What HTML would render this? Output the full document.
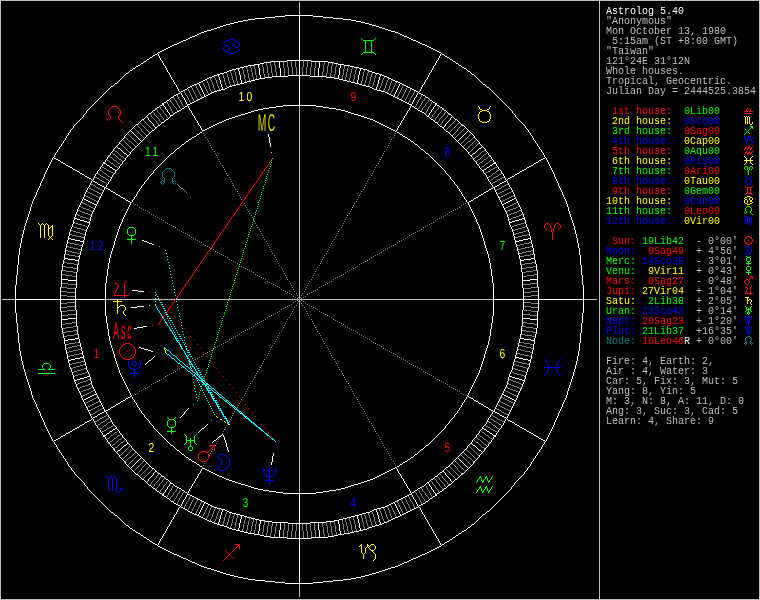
<!DOCTYPE html>
<html lang="en">
<head>
<meta charset="utf-8">
<title>Astrolog 5.40 - Wheel Chart</title>
<style>
html,body{margin:0;padding:0;background:#000;}
body{width:760px;height:600px;overflow:hidden;position:relative;}
#chart{position:absolute;left:0;top:0;width:760px;height:600px;display:block;will-change:transform;}
#side{position:absolute;left:606px;top:0;width:153px;height:600px;will-change:transform;
 font-family:"Liberation Mono",monospace;font-size:10px;line-height:10px;color:#bfbfbf;}
.l{position:absolute;left:0;white-space:pre;height:10px;}
</style>
</head>
<body>
<svg id="chart" width="760" height="600" viewBox="0 0 760 600" shape-rendering="crispEdges" fill="none" stroke-width="1" text-rendering="geometricPrecision">
<g text-anchor="middle">
<g id="frame">
<path stroke="#bfbfbf" d="M0 0.5h760m-760 599h760"/>
<path stroke="#bfbfbf" d="M0.5 0v600m599 -600v600m160 -600v600"/>
</g>
<g id="axes">
<path stroke="#bfbfbf" d="M2 299.5h595"/>
<path stroke="#bfbfbf" d="M299.5 2v595"/>
</g>
<g id="ticks">
<path stroke="#7f7f7f" d="M287 60.5h1m3 0h1m3 0h1m7 0h1m3 0h1m3 0h1m-38 1h1m8 0h1m3 0h1m3 0h1m3 0h1m7 0h1m3 0h1m3 0h1m3 0h1m8 0h1m-59 1h1m3 0h1m3 0h1m8 0h1m3 0h1m3 0h1m3 0h1m7 0h1m3 0h1m3 0h1m3 0h1m8 0h1m3 0h1m3 0h1m-71 1h1m3 0h1m3 0h1m3 0h1m8 0h1m3 0h1m3 0h1m3 0h1m7 0h1m3 0h1m3 0h1m3 0h1m8 0h1m3 0h1m3 0h1m3 0h1m-75 1h1m3 0h1m3 0h1m3 0h1m8 0h1m3 0h1m3 0h1m3 0h1m7 0h1m3 0h1m3 0h1m3 0h1m8 0h1m3 0h1m3 0h1m3 0h1m-87 1h1m3 0h1m7 0h1m3 0h1m3 0h1m4 0h1m7 0h1m3 0h1m3 0h1m3 0h1m7 0h1m3 0h1m3 0h1m3 0h1m7 0h1m4 0h1m3 0h1m3 0h1m7 0h1m3 0h1m-103 1h1m3 0h1m3 0h1m7 0h1m4 0h1m3 0h1m3 0h1m7 0h1m3 0h1m3 0h1m3 0h1m7 0h1m3 0h1m3 0h1m3 0h1m7 0h1m3 0h1m3 0h1m4 0h1m7 0h1m3 0h1m3 0h1m-111 1h1m3 0h1m3 0h1m3 0h1m8 0h1m3 0h1m3 0h1m3 0h1m7 0h1m4 0h1m3 0h1m3 0h1m5 0h1m3 0h1m3 0h1m4 0h1m7 0h1m3 0h1m3 0h1m3 0h1m8 0h1m3 0h1m3 0h1m3 0h1m-115 1h1m3 0h1m4 0h1m2 0h1m8 0h1m3 0h1m3 0h1m3 0h1m8 0h1m3 0h1m3 0h1m3 0h1m5 0h1m3 0h1m3 0h1m3 0h1m8 0h1m3 0h1m3 0h1m3 0h1m8 0h1m2 0h1m4 0h1m3 0h1m-123 1h1m7 0h1m4 0h1m3 0h1m3 0h1m7 0h1m3 0h1m3 0h1m3 0h1m8 0h1m3 0h1m3 0h1m3 0h1m5 0h1m3 0h1m3 0h1m3 0h1m8 0h1m3 0h1m3 0h1m3 0h1m7 0h1m3 0h1m3 0h1m4 0h1m7 0h1m-131 1h1m8 0h1m3 0h1m3 0h1m3 0h1m7 0h1m3 0h1m3 0h1m3 0h1m8 0h1m3 0h1m3 0h1m3 0h1m5 0h1m3 0h1m3 0h1m3 0h1m8 0h1m3 0h1m3 0h1m3 0h1m7 0h1m3 0h1m3 0h1m3 0h1m8 0h1m-135 1h1m3 0h1m8 0h1m3 0h1m3 0h1m3 0h1m7 0h1m3 0h1m3 0h1m3 0h1m8 0h1m3 0h1m3 0h1m3 0h1m5 0h1m3 0h1m3 0h1m3 0h1m8 0h1m3 0h1m3 0h1m3 0h1m7 0h1m3 0h1m3 0h1m3 0h1m8 0h1m3 0h1m-143 1h1m3 0h1m4 0h1m7 0h1m3 0h1m4 0h1m2 0h1m7 0h1m3 0h1m3 0h1m4 0h1m7 0h1m3 0h1m3 0h1m3 0h1m5 0h1m3 0h1m3 0h1m3 0h1m7 0h1m4 0h1m3 0h1m3 0h1m7 0h1m2 0h1m4 0h1m3 0h1m7 0h1m4 0h1m3 0h1m-151 1h1m3 0h1m4 0h1m3 0h1m7 0h1m4 0h1m3 0h1m2 0h1m7 0h1m4 0h1m3 0h1m3 0h1m7 0h1m3 0h1m3 0h1m3 0h1m5 0h1m3 0h1m3 0h1m3 0h1m7 0h1m3 0h1m3 0h1m4 0h1m7 0h1m2 0h1m3 0h1m4 0h1m7 0h1m3 0h1m4 0h1m3 0h1m-155 1h1m4 0h1m3 0h1m3 0h1m8 0h1m3 0h1m3 0h1m2 0h1m8 0h1m3 0h1m3 0h1m3 0h1m7 0h1m3 0h1m3 0h1m3 0h1m5 0h1m3 0h1m3 0h1m3 0h1m7 0h1m3 0h1m3 0h1m3 0h1m8 0h1m2 0h1m3 0h1m3 0h1m8 0h1m3 0h1m3 0h1m4 0h1m-154 1h1m3 0h1m3 0h1m3 0h1m8 0h1m3 0h1m3 0h1m3 0h1m7 0h1m3 0h1m3 0h1m3 0h1m7 0h1m29 0h1m7 0h1m3 0h1m3 0h1m3 0h1m7 0h1m3 0h1m3 0h1m3 0h1m8 0h1m3 0h1m3 0h1m3 0h1m-162 1h1m8 0h1m3 0h1m4 0h1m3 0h1m7 0h1m3 0h1m3 0h1m3 0h1m7 0h1m3 0h1m3 0h1m53 0h1m3 0h1m3 0h1m7 0h1m3 0h1m3 0h1m3 0h1m7 0h1m3 0h1m4 0h1m3 0h1m8 0h1m-171 1h1m8 0h1m4 0h1m3 0h1m3 0h1m7 0h1m3 0h1m4 0h1m2 0h1m7 0h1m69 0h1m7 0h1m2 0h1m4 0h1m3 0h1m7 0h1m3 0h1m3 0h1m4 0h1m8 0h1m-175 1h1m4 0h1m8 0h1m3 0h1m3 0h1m3 0h1m7 0h1m4 0h1m3 0h1m2 0h1m85 0h1m2 0h1m3 0h1m4 0h1m7 0h1m3 0h1m3 0h1m3 0h1m8 0h1m4 0h1m-183 1h1m3 0h1m4 0h1m8 0h1m3 0h1m3 0h1m3 0h1m8 0h1m3 0h1m3 0h1m91 0h1m3 0h1m3 0h1m8 0h1m3 0h1m3 0h1m3 0h1m8 0h1m4 0h1m3 0h1m-187 1h1m4 0h1m4 0h1m7 0h1m3 0h1m4 0h1m2 0h1m8 0h1m3 0h1m99 0h1m3 0h1m8 0h1m2 0h1m4 0h1m3 0h1m7 0h1m4 0h1m4 0h1m-191 1h1m4 0h1m3 0h1m4 0h1m7 0h1m4 0h1m3 0h1m3 0h1m7 0h1m107 0h1m7 0h1m3 0h1m3 0h1m4 0h1m7 0h1m4 0h1m3 0h1m4 0h1m-195 1h1m4 0h1m4 0h1m3 0h1m8 0h1m3 0h1m3 0h1m3 0h1m123 0h1m3 0h1m3 0h1m3 0h1m8 0h1m3 0h1m4 0h1m4 0h1m-194 1h1m4 0h1m3 0h1m4 0h1m7 0h1m3 0h1m4 0h1m2 0h1m123 0h1m2 0h1m4 0h1m3 0h1m7 0h1m4 0h1m3 0h1m4 0h1m-201 1h1m7 0h1m4 0h1m3 0h1m4 0h1m7 0h1m4 0h1m3 0h1m129 0h1m3 0h1m4 0h1m7 0h1m4 0h1m3 0h1m4 0h1m7 0h1m-209 1h1m8 0h1m3 0h1m4 0h1m3 0h1m8 0h1m3 0h1m137 0h1m3 0h1m8 0h1m3 0h1m4 0h1m3 0h1m8 0h1m-213 1h1m4 0h1m7 0h1m4 0h1m3 0h1m4 0h1m7 0h1m145 0h1m7 0h1m4 0h1m3 0h1m4 0h1m7 0h1m4 0h1m-217 1h1m4 0h1m8 0h1m3 0h1m3 0h1m4 0h1m161 0h1m4 0h1m3 0h1m3 0h1m8 0h1m4 0h1m-221 1h1m4 0h1m4 0h1m7 0h1m3 0h1m4 0h1m4 0h1m159 0h1m4 0h1m4 0h1m3 0h1m7 0h1m4 0h1m4 0h1m-224 1h1m3 0h1m4 0h1m8 0h1m3 0h1m3 0h1m4 0h1m159 0h1m4 0h1m3 0h1m3 0h1m8 0h1m4 0h1m3 0h1m-228 1h1m4 0h1m4 0h1m4 0h1m7 0h1m3 0h1m4 0h1m167 0h1m4 0h1m3 0h1m7 0h1m4 0h1m4 0h1m4 0h1m-232 1h1m4 0h1m3 0h1m4 0h1m8 0h1m3 0h1m3 0h1m167 0h1m3 0h1m3 0h1m8 0h1m4 0h1m3 0h1m4 0h1m-231 1h1m4 0h1m4 0h1m4 0h1m7 0h1m3 0h1m175 0h1m3 0h1m7 0h1m4 0h1m4 0h1m4 0h1m-230 1h1m4 0h1m3 0h1m4 0h1m8 0h1m181 0h1m8 0h1m4 0h1m3 0h1m4 0h1m-238 1h1m8 0h1m4 0h1m4 0h1m4 0h1m7 0h1m181 0h1m7 0h1m4 0h1m4 0h1m4 0h1m8 0h1m-246 1h1m8 0h1m4 0h1m3 0h1m4 0h1m197 0h1m4 0h1m3 0h1m4 0h1m8 0h1m-245 1h1m9 0h1m3 0h1m4 0h1m4 0h1m195 0h1m4 0h1m4 0h1m3 0h1m9 0h1m-249 1h1m4 0h1m8 0h1m4 0h1m3 0h1m4 0h1m195 0h1m4 0h1m3 0h1m4 0h1m8 0h1m4 0h1m-252 1h1m3 0h1m9 0h1m3 0h1m4 0h1m203 0h1m4 0h1m3 0h1m9 0h1m3 0h1m-256 1h1m4 0h1m4 0h1m8 0h1m4 0h1m3 0h1m203 0h1m3 0h1m4 0h1m8 0h1m4 0h1m4 0h1m-260 1h1m4 0h1m4 0h1m8 0h1m3 0h1m211 0h1m3 0h1m8 0h1m4 0h1m4 0h1m-263 1h1m3 0h1m5 0h1m3 0h1m8 0h1m4 0h1m209 0h1m4 0h1m8 0h1m3 0h1m5 0h1m3 0h1m-266 1h1m3 0h1m4 0h1m4 0h1m8 0h1m217 0h1m8 0h1m4 0h1m4 0h1m3 0h1m-265 1h1m4 0h1m4 0h1m3 0h1m235 0h1m3 0h1m4 0h1m4 0h1m-264 1h1m4 0h1m3 0h1m4 0h1m233 0h1m4 0h1m3 0h1m4 0h1m-263 1h1m4 0h1m4 0h1m3 0h1m233 0h1m3 0h1m4 0h1m4 0h1m-272 1h1m9 0h1m4 0h1m4 0h1m3 0h1m231 0h1m3 0h1m4 0h1m4 0h1m9 0h1m-280 1h1m9 0h1m4 0h1m3 0h1m239 0h1m3 0h1m4 0h1m9 0h1m-284 1h1m4 0h1m9 0h1m5 0h1m3 0h1m237 0h1m3 0h1m5 0h1m9 0h1m4 0h1m-288 1h1m4 0h1m9 0h1m4 0h1m245 0h1m4 0h1m9 0h1m4 0h1m-286 1h1m4 0h1m8 0h1m5 0h1m243 0h1m5 0h1m8 0h1m4 0h1m-290 1h1m4 0h1m5 0h1m8 0h1m253 0h1m8 0h1m5 0h1m4 0h1m-294 1h1m4 0h1m4 0h1m8 0h1m253 0h1m8 0h1m4 0h1m4 0h1m-297 1h1m4 0h1m4 0h1m4 0h1m8 0h1m251 0h1m8 0h1m4 0h1m4 0h1m4 0h1m-300 1h1m3 0h1m5 0h1m4 0h1m267 0h1m4 0h1m5 0h1m3 0h1m-298 1h1m3 0h1m4 0h1m5 0h1m265 0h1m5 0h1m4 0h1m3 0h1m-297 1h1m4 0h1m4 0h1m4 0h1m265 0h1m4 0h1m4 0h1m4 0h1m-296 1h1m4 0h1m4 0h1m4 0h1m263 0h1m4 0h1m4 0h1m4 0h1m-294 1h1m4 0h1m4 0h1m271 0h1m4 0h1m4 0h1m-304 1h1m11 0h1m4 0h1m3 0h1m271 0h1m3 0h1m4 0h1m11 0h1m-314 1h1m11 0h1m3 0h1m4 0h1m269 0h1m4 0h1m3 0h1m11 0h1m-312 1h1m11 0h1m3 0h1m277 0h1m3 0h1m11 0h1m-316 1h1m5 0h1m10 0h1m4 0h1m275 0h1m4 0h1m10 0h1m5 0h1m-320 1h1m5 0h1m10 0h1m283 0h1m10 0h1m5 0h1m-323 1h1m4 0h1m5 0h1m10 0h1m281 0h1m10 0h1m5 0h1m4 0h1m-326 1h1m4 0h1m5 0h1m301 0h1m5 0h1m4 0h1m-324 1h1m4 0h1m5 0h1m299 0h1m5 0h1m4 0h1m-328 1h1m5 0h1m4 0h1m5 0h1m297 0h1m5 0h1m4 0h1m5 0h1m-332 1h1m5 0h1m4 0h1m5 0h1m295 0h1m5 0h1m4 0h1m5 0h1m-330 1h1m5 0h1m4 0h1m5 0h1m293 0h1m5 0h1m4 0h1m5 0h1m-328 1h1m4 0h1m5 0h1m303 0h1m5 0h1m4 0h1m-326 1h1m4 0h1m5 0h1m301 0h1m5 0h1m4 0h1m-324 1h1m4 0h1m5 0h1m299 0h1m5 0h1m4 0h1m-334 1h1m11 0h1m4 0h1m309 0h1m4 0h1m11 0h1m-344 1h1m11 0h1m4 0h1m307 0h1m4 0h1m11 0h1m-342 1h1m11 0h1m4 0h1m305 0h1m4 0h1m11 0h1m-346 1h1m5 0h1m11 0h1m313 0h1m11 0h1m5 0h1m-350 1h1m5 0h1m11 0h1m311 0h1m11 0h1m5 0h1m-348 1h1m5 0h1m333 0h1m5 0h1m-351 1h1m4 0h1m5 0h1m331 0h1m5 0h1m4 0h1m-354 1h1m4 0h1m5 0h1m329 0h1m5 0h1m4 0h1m-352 1h1m4 0h2m4 0h1m327 0h1m4 0h2m4 0h1m-356 1h1m5 0h1m5 0h1m4 0h1m325 0h1m4 0h1m5 0h1m5 0h1m-360 1h1m5 0h1m5 0h1m4 0h1m323 0h1m4 0h1m5 0h1m5 0h1m-358 1h1m5 0h1m5 0h1m331 0h1m5 0h1m5 0h1m-356 1h1m5 0h1m5 0h1m329 0h1m5 0h1m5 0h1m-354 1h1m5 0h1m5 0h1m327 0h1m5 0h1m5 0h1m-352 1h1m5 0h1m337 0h1m5 0h1m-350 1h1m5 0h1m335 0h1m5 0h1m-361 1h1m12 0h1m5 0h1m333 0h1m5 0h1m12 0h1m-372 1h1m12 0h1m343 0h1m12 0h1m-370 1h2m11 0h1m341 0h1m11 0h2m-373 1h1m5 0h1m11 0h1m339 0h1m11 0h1m5 0h1m-376 1h1m5 0h1m361 0h1m5 0h1m-374 1h2m4 0h1m359 0h1m4 0h2m-378 1h1m6 0h1m4 0h1m357 0h1m4 0h1m6 0h1m-382 1h1m6 0h1m4 0h2m353 0h2m4 0h1m5 0h2m-380 1h2m5 0h1m5 0h1m351 0h1m5 0h1m5 0h1m-376 1h1m5 0h1m5 0h1m349 0h1m5 0h1m5 0h1m-381 1h1m6 0h1m5 0h2m357 0h2m4 0h2m6 0h1m-386 1h2m5 0h2m5 0h1m355 0h1m5 0h1m6 0h2m-383 1h1m6 0h1m5 0h1m353 0h1m5 0h1m6 0h1m-380 1h1m6 0h1m362 0h2m6 0h1m-378 1h2m5 0h2m359 0h1m6 0h2m-375 1h1m6 0h1m357 0h1m6 0h1m-372 1h1m369 0h1m-384 1h1m13 0h2m365 0h2m13 0h1m-396 1h2m13 0h1m363 0h1m13 0h2m-393 1h2m387 0h2m-396 1h1m6 0h1m384 0h2m6 0h1m-400 1h2m5 0h2m381 0h1m6 0h2m-397 1h1m6 0h2m377 0h2m6 0h1m-394 1h1m7 0h2m373 0h2m7 0h1m-399 1h1m6 0h2m7 0h1m371 0h1m7 0h2m6 0h1m-404 1h2m6 0h1m385 0h1m6 0h2m-401 1h1m6 0h1m383 0h1m6 0h1m-405 1h1m6 0h2m5 0h2m379 0h2m5 0h2m6 0h1m-410 1h2m6 0h2m5 0h1m377 0h1m5 0h2m6 0h2m-407 1h2m6 0h1m387 0h1m6 0h2m-403 1h1m6 0h2m383 0h2m5 0h2m-400 1h2m6 0h1m381 0h1m6 0h1m-396 1h2m391 0h2m-393 1h2m387 0h2m-405 1h1m15 0h1m385 0h1m15 0h1m-418 1h2m413 0h2m-415 1h2m409 0h2m-411 1h1m406 0h2m-416 1h1m7 0h2m403 0h1m8 0h1m-422 1h2m7 0h2m399 0h2m7 0h2m-419 1h2m7 0h2m395 0h2m7 0h2m-415 1h2m7 0h1m393 0h1m7 0h2m-420 1h2m7 0h2m405 0h2m7 0h2m-425 1h2m7 0h2m401 0h2m7 0h2m-421 1h2m7 0h2m397 0h2m7 0h2m-417 1h2m7 0h1m395 0h1m7 0h2m-423 1h2m8 0h2m407 0h2m8 0h2m-429 1h2m8 0h2m403 0h2m8 0h2m-425 1h2m8 0h2m399 0h2m8 0h2m-421 1h2m415 0h2m-417 1h2m411 0h2m-413 1h2m407 0h2m-409 1h2m403 0h2m-422 1h2m433 0h2m-435 1h2m429 0h2m-431 1h2m425 0h2m-427 1h2m421 0h2m-433 1h2m8 0h2m417 0h2m8 0h2m-439 1h2m8 0h2m413 0h2m8 0h2m-435 1h3m7 0h2m409 0h2m7 0h3m-430 1h3m421 0h3m-435 1h2m9 0h2m417 0h2m9 0h2m-441 1h2m9 0h2m413 0h2m9 0h2m-437 1h3m429 0h3m-432 1h3m423 0h3m-438 1h2m10 0h2m419 0h2m10 0h2m-445 1h2m10 0h2m415 0h2m10 0h2m-441 1h3m433 0h3m-436 1h3m427 0h3m-430 1h2m423 0h2m-425 1h2m419 0h2m-438 3h2m449 0h2m-451 1h3m443 0h3m-446 1h4m435 0h4m-439 1h3m429 0h3m-445 1h2m11 0h2m425 0h2m11 0h2m-453 1h3m445 0h3m-448 1h4m437 0h4m-441 1h3m431 0h3m-447 1h2m11 0h2m427 0h2m11 0h2m-455 1h3m447 0h3m-450 1h4m439 0h4m-443 1h3m433 0h3m-450 1h3m11 0h2m429 0h2m11 0h3m-458 1h4m446 0h5m-451 1h5m437 0h4m-441 1h3m431 0h3m-451 5h3m459 0h3m-462 1h4m450 0h5m-455 1h5m441 0h4m-445 1h3m435 0h3m-454 1h3m461 0h3m-464 1h4m452 0h5m-457 1h5m443 0h4m-447 1h3m437 0h3m-456 1h3m463 0h3m-466 1h4m454 0h5m-459 1h5m445 0h4m-449 1h3m439 0h3m-457 1h4m461 0h4m-465 1h6m449 0h6m-455 1h4m441 0h4m-461 6h4m465 0h4m-469 1h7m451 0h7m-458 1h4m443 0h4m-463 2h4m467 0h4m-471 1h7m453 0h7m-460 1h4m445 0h4m-464 2h4m467 0h4m-471 1h7m453 0h7m-460 1h4m445 0h4m-465 2h4m469 0h4m-473 1h7m455 0h7m-462 1h4m447 0h4m-466 7h7m462 0h8m-470 1h8m447 0h7m-470 3h7m464 0h8m-472 1h8m449 0h7m-471 3h7m464 0h8m-472 1h8m449 0h7m-471 3h7m464 0h8m-472 1h8m449 0h7m-464 6h8m449 0h7m-471 1h7m464 0h8m-472 3h8m449 0h7m-471 1h7m464 0h8m-472 3h8m449 0h7m-471 1h7m464 0h8m-471 3h8m447 0h7m-469 1h7m462 0h8m-466 7h4m447 0h4m-462 1h7m455 0h7m-473 1h4m469 0h4m-465 2h4m445 0h4m-460 1h7m453 0h7m-471 1h4m467 0h4m-464 2h4m445 0h4m-460 1h7m453 0h7m-471 1h4m467 0h4m-463 2h4m443 0h4m-458 1h7m451 0h7m-469 1h4m465 0h4m-461 6h4m441 0h4m-455 1h6m449 0h6m-465 1h4m461 0h4m-457 1h3m439 0h3m-450 1h5m445 0h4m-458 1h4m454 0h5m-466 1h3m463 0h3m-456 1h3m437 0h3m-448 1h5m443 0h4m-456 1h4m452 0h5m-464 1h3m461 0h3m-454 1h3m435 0h3m-446 1h5m441 0h4m-454 1h4m450 0h5m-462 1h3m459 0h3m-451 5h3m431 0h3m-442 1h5m437 0h4m-450 1h4m446 0h5m-458 1h3m11 0h2m429 0h2m11 0h3m-450 1h3m433 0h3m-443 1h4m439 0h4m-450 1h3m447 0h3m-455 1h2m11 0h2m427 0h2m11 0h2m-447 1h3m431 0h3m-441 1h4m437 0h4m-448 1h3m445 0h3m-453 1h2m11 0h2m425 0h2m11 0h2m-445 1h3m429 0h3m-439 1h4m435 0h4m-446 1h3m443 0h3m-451 1h2m449 0h2m-438 3h2m419 0h2m-425 1h2m423 0h2m-430 1h3m427 0h3m-436 1h3m433 0h3m-441 1h2m10 0h2m415 0h2m10 0h2m-445 1h2m10 0h2m419 0h2m10 0h2m-438 1h3m423 0h3m-432 1h3m429 0h3m-437 1h2m9 0h2m413 0h2m9 0h2m-441 1h2m9 0h2m417 0h2m9 0h2m-435 1h3m421 0h3m-430 1h3m7 0h2m409 0h2m7 0h3m-435 1h2m8 0h2m413 0h2m8 0h2m-439 1h2m8 0h2m417 0h2m8 0h2m-433 1h2m421 0h2m-427 1h2m425 0h2m-431 1h2m429 0h2m-435 1h2m433 0h2m-422 1h2m403 0h2m-409 1h2m407 0h2m-413 1h2m411 0h2m-417 1h2m415 0h2m-421 1h2m8 0h2m399 0h2m8 0h2m-425 1h2m8 0h2m403 0h2m8 0h2m-429 1h2m8 0h2m407 0h2m8 0h2m-423 1h2m7 0h1m395 0h1m7 0h2m-417 1h2m7 0h2m397 0h2m7 0h2m-421 1h2m7 0h2m401 0h2m7 0h2m-425 1h2m7 0h2m405 0h2m7 0h2m-420 1h2m7 0h1m393 0h1m7 0h2m-415 1h2m7 0h2m395 0h2m7 0h2m-419 1h2m7 0h2m399 0h2m7 0h2m-422 1h1m7 0h2m403 0h1m8 0h1m-416 1h1m406 0h2m-411 1h2m409 0h2m-415 1h2m413 0h2m-418 1h1m15 0h1m385 0h1m15 0h1m-405 1h2m387 0h2m-393 1h2m391 0h2m-397 1h2m6 0h1m381 0h1m6 0h1m-399 1h1m6 0h2m383 0h2m5 0h2m-403 1h2m6 0h1m387 0h1m6 0h2m-407 1h2m6 0h2m5 0h1m377 0h1m5 0h2m6 0h2m-410 1h1m6 0h2m5 0h2m379 0h2m5 0h2m6 0h1m-405 1h1m6 0h1m383 0h1m6 0h1m-401 1h2m6 0h1m385 0h1m6 0h2m-404 1h1m6 0h2m7 0h1m371 0h1m7 0h2m6 0h1m-399 1h1m7 0h2m373 0h2m7 0h1m-394 1h1m6 0h2m377 0h2m6 0h1m-397 1h2m5 0h2m381 0h1m6 0h2m-400 1h1m6 0h1m384 0h2m6 0h1m-396 1h2m387 0h2m-393 1h2m13 0h1m363 0h1m13 0h2m-396 1h1m13 0h2m365 0h2m13 0h1m-384 1h1m369 0h1m-372 1h1m6 0h1m357 0h1m6 0h1m-375 1h2m5 0h2m359 0h1m6 0h2m-378 1h1m6 0h1m362 0h2m6 0h1m-380 1h1m6 0h1m5 0h1m353 0h1m5 0h1m6 0h1m-383 1h2m5 0h2m5 0h1m355 0h1m5 0h1m6 0h2m-386 1h1m6 0h1m5 0h2m357 0h2m4 0h2m6 0h1m-381 1h1m5 0h1m5 0h1m349 0h1m5 0h1m5 0h1m-377 1h2m5 0h1m5 0h1m351 0h1m5 0h1m5 0h1m-379 1h1m6 0h1m4 0h2m353 0h2m4 0h1m5 0h2m-382 1h1m6 0h1m4 0h1m357 0h1m4 0h1m6 0h1m-378 1h2m4 0h1m359 0h1m4 0h2m-374 1h1m5 0h1m361 0h1m5 0h1m-376 1h1m5 0h1m11 0h1m339 0h1m11 0h1m5 0h1m-373 1h2m11 0h1m341 0h1m11 0h2m-370 1h1m12 0h1m343 0h1m12 0h1m-372 1h1m12 0h1m5 0h1m333 0h1m5 0h1m12 0h1m-361 1h1m5 0h1m335 0h1m5 0h1m-350 1h1m5 0h1m337 0h1m5 0h1m-352 1h1m5 0h1m5 0h1m327 0h1m5 0h1m5 0h1m-354 1h1m5 0h1m5 0h1m329 0h1m5 0h1m5 0h1m-356 1h1m5 0h1m5 0h1m331 0h1m5 0h1m5 0h1m-358 1h1m5 0h1m5 0h1m4 0h1m323 0h1m4 0h1m5 0h1m5 0h1m-360 1h1m5 0h1m5 0h1m4 0h1m325 0h1m4 0h1m5 0h1m5 0h1m-356 1h1m4 0h2m4 0h1m327 0h1m4 0h2m4 0h1m-352 1h1m4 0h1m5 0h1m329 0h1m5 0h1m4 0h1m-354 1h1m4 0h1m5 0h1m331 0h1m5 0h1m4 0h1m-351 1h1m5 0h1m333 0h1m5 0h1m-348 1h1m5 0h1m11 0h1m311 0h1m11 0h1m5 0h1m-350 1h1m5 0h1m11 0h1m313 0h1m11 0h1m5 0h1m-346 1h1m11 0h1m4 0h1m305 0h1m4 0h1m11 0h1m-342 1h1m11 0h1m4 0h1m307 0h1m4 0h1m11 0h1m-344 1h1m11 0h1m4 0h1m309 0h1m4 0h1m11 0h1m-334 1h1m4 0h1m5 0h1m299 0h1m5 0h1m4 0h1m-324 1h1m4 0h1m5 0h1m301 0h1m5 0h1m4 0h1m-326 1h1m4 0h1m5 0h1m303 0h1m5 0h1m4 0h1m-328 1h1m5 0h1m4 0h1m5 0h1m293 0h1m5 0h1m4 0h1m5 0h1m-330 1h1m5 0h1m4 0h1m5 0h1m295 0h1m5 0h1m4 0h1m5 0h1m-332 1h1m5 0h1m4 0h1m5 0h1m297 0h1m5 0h1m4 0h1m5 0h1m-328 1h1m4 0h1m5 0h1m299 0h1m5 0h1m4 0h1m-324 1h1m4 0h1m5 0h1m301 0h1m5 0h1m4 0h1m-326 1h1m4 0h1m5 0h1m10 0h1m281 0h1m10 0h1m5 0h1m4 0h1m-323 1h1m5 0h1m10 0h1m283 0h1m10 0h1m5 0h1m-320 1h1m5 0h1m10 0h1m4 0h1m275 0h1m4 0h1m10 0h1m5 0h1m-316 1h1m11 0h1m3 0h1m277 0h1m3 0h1m11 0h1m-312 1h1m11 0h1m3 0h1m4 0h1m269 0h1m4 0h1m3 0h1m11 0h1m-314 1h1m11 0h1m4 0h1m3 0h1m271 0h1m3 0h1m4 0h1m11 0h1m-304 1h1m4 0h1m3 0h1m273 0h1m3 0h1m4 0h1m-294 1h1m4 0h1m4 0h1m4 0h1m263 0h1m4 0h1m4 0h1m4 0h1m-296 1h1m4 0h1m4 0h1m4 0h1m265 0h1m4 0h1m4 0h1m4 0h1m-297 1h1m3 0h1m4 0h1m5 0h1m265 0h1m5 0h1m4 0h1m3 0h1m-298 1h1m3 0h1m4 0h1m5 0h1m267 0h1m5 0h1m4 0h1m3 0h1m-300 1h1m4 0h1m4 0h1m4 0h1m8 0h1m251 0h1m8 0h1m4 0h1m4 0h1m4 0h1m-297 1h1m4 0h1m4 0h1m8 0h1m253 0h1m8 0h1m4 0h1m4 0h1m-294 1h1m4 0h1m5 0h1m8 0h1m253 0h1m8 0h1m5 0h1m4 0h1m-291 1h1m5 0h1m8 0h1m5 0h1m243 0h1m5 0h1m8 0h1m5 0h1m-287 1h1m4 0h1m9 0h1m4 0h1m245 0h1m4 0h1m9 0h1m4 0h1m-288 1h1m4 0h1m9 0h1m5 0h1m3 0h1m237 0h1m3 0h1m5 0h1m9 0h1m4 0h1m-284 1h1m8 0h1m5 0h1m3 0h1m239 0h1m3 0h1m5 0h1m8 0h1m-280 1h1m9 0h1m4 0h1m4 0h1m3 0h1m231 0h1m3 0h1m4 0h1m4 0h1m9 0h1m-272 1h1m4 0h1m4 0h1m3 0h1m233 0h1m3 0h1m4 0h1m4 0h1m-263 1h1m4 0h1m3 0h1m4 0h1m233 0h1m4 0h1m3 0h1m4 0h1m-264 1h1m4 0h1m4 0h1m3 0h1m235 0h1m3 0h1m4 0h1m4 0h1m-265 1h1m3 0h1m4 0h1m4 0h1m8 0h1m217 0h1m8 0h1m4 0h1m4 0h1m3 0h1m-266 1h1m3 0h1m5 0h1m3 0h1m8 0h1m4 0h1m209 0h1m4 0h1m8 0h1m3 0h1m5 0h1m3 0h1m-263 1h1m4 0h1m3 0h1m9 0h1m3 0h1m211 0h1m3 0h1m9 0h1m3 0h1m4 0h1m-260 1h1m4 0h1m4 0h1m8 0h1m4 0h1m3 0h1m203 0h1m3 0h1m4 0h1m8 0h1m4 0h1m4 0h1m-256 1h1m3 0h1m9 0h1m3 0h1m4 0h1m203 0h1m4 0h1m3 0h1m9 0h1m3 0h1m-252 1h1m4 0h1m8 0h1m4 0h1m3 0h1m4 0h1m195 0h1m4 0h1m3 0h1m4 0h1m8 0h1m4 0h1m-249 1h1m8 0h1m4 0h1m4 0h1m4 0h1m195 0h1m4 0h1m4 0h1m4 0h1m8 0h1m-245 1h1m8 0h1m4 0h1m3 0h1m4 0h1m197 0h1m4 0h1m3 0h1m4 0h1m8 0h1m-246 1h1m8 0h1m4 0h1m4 0h1m4 0h1m7 0h1m181 0h1m7 0h1m4 0h1m4 0h1m4 0h1m8 0h1m-238 1h1m4 0h1m3 0h1m4 0h1m8 0h1m181 0h1m8 0h1m4 0h1m3 0h1m4 0h1m-230 1h1m4 0h1m4 0h1m4 0h1m7 0h1m3 0h1m175 0h1m3 0h1m7 0h1m4 0h1m4 0h1m4 0h1m-231 1h1m4 0h1m3 0h1m4 0h1m8 0h1m3 0h1m3 0h1m167 0h1m3 0h1m3 0h1m8 0h1m4 0h1m3 0h1m4 0h1m-232 1h1m4 0h1m4 0h1m4 0h1m7 0h1m3 0h1m4 0h1m167 0h1m4 0h1m3 0h1m7 0h1m4 0h1m4 0h1m4 0h1m-228 1h1m3 0h1m4 0h1m8 0h1m3 0h1m3 0h1m4 0h1m159 0h1m4 0h1m3 0h1m3 0h1m8 0h1m4 0h1m3 0h1m-224 1h1m4 0h1m4 0h1m7 0h1m3 0h1m4 0h1m4 0h1m159 0h1m4 0h1m4 0h1m3 0h1m7 0h1m4 0h1m4 0h1m-221 1h1m4 0h1m8 0h1m3 0h1m3 0h1m4 0h1m161 0h1m4 0h1m3 0h1m3 0h1m8 0h1m4 0h1m-217 1h1m4 0h1m7 0h1m4 0h1m3 0h1m4 0h1m7 0h1m145 0h1m7 0h1m4 0h1m3 0h1m4 0h1m7 0h1m4 0h1m-213 1h1m8 0h1m3 0h1m4 0h1m3 0h1m8 0h1m3 0h1m137 0h1m3 0h1m8 0h1m3 0h1m4 0h1m3 0h1m8 0h1m-209 1h1m7 0h1m4 0h1m3 0h1m4 0h1m7 0h1m4 0h1m3 0h1m129 0h1m3 0h1m4 0h1m7 0h1m4 0h1m3 0h1m4 0h1m7 0h1m-201 1h1m4 0h1m3 0h1m4 0h1m7 0h1m3 0h1m4 0h1m2 0h1m123 0h1m2 0h1m4 0h1m3 0h1m7 0h1m4 0h1m3 0h1m4 0h1m-194 1h1m4 0h1m4 0h1m3 0h1m8 0h1m3 0h1m3 0h1m3 0h1m123 0h1m3 0h1m3 0h1m3 0h1m8 0h1m3 0h1m4 0h1m4 0h1m-195 1h1m4 0h1m3 0h1m4 0h1m7 0h1m4 0h1m3 0h1m3 0h1m7 0h1m107 0h1m7 0h1m3 0h1m3 0h1m4 0h1m7 0h1m4 0h1m3 0h1m4 0h1m-191 1h1m4 0h1m4 0h1m7 0h1m3 0h1m4 0h1m2 0h1m8 0h1m3 0h1m99 0h1m3 0h1m8 0h1m2 0h1m4 0h1m3 0h1m7 0h1m4 0h1m4 0h1m-187 1h1m3 0h1m4 0h1m8 0h1m3 0h1m3 0h1m3 0h1m8 0h1m3 0h1m3 0h1m91 0h1m3 0h1m3 0h1m8 0h1m3 0h1m3 0h1m3 0h1m8 0h1m4 0h1m3 0h1m-183 1h1m4 0h1m8 0h1m3 0h1m3 0h1m3 0h1m7 0h1m4 0h1m3 0h1m2 0h1m85 0h1m2 0h1m3 0h1m4 0h1m7 0h1m3 0h1m3 0h1m3 0h1m8 0h1m4 0h1m-175 1h1m8 0h1m4 0h1m3 0h1m3 0h1m7 0h1m3 0h1m4 0h1m2 0h1m7 0h1m69 0h1m7 0h1m2 0h1m4 0h1m3 0h1m7 0h1m3 0h1m3 0h1m4 0h1m8 0h1m-171 1h1m8 0h1m3 0h1m4 0h1m2 0h1m8 0h1m3 0h1m3 0h1m3 0h1m7 0h1m3 0h1m3 0h1m53 0h1m3 0h1m3 0h1m7 0h1m3 0h1m3 0h1m3 0h1m8 0h1m2 0h1m4 0h1m3 0h1m8 0h1m-162 1h1m3 0h1m3 0h1m3 0h1m8 0h1m3 0h1m3 0h1m3 0h1m7 0h1m3 0h1m3 0h1m3 0h1m7 0h1m29 0h1m7 0h1m3 0h1m3 0h1m3 0h1m7 0h1m3 0h1m3 0h1m3 0h1m8 0h1m3 0h1m3 0h1m3 0h1m-154 1h1m4 0h1m3 0h1m3 0h1m7 0h1m4 0h1m3 0h1m2 0h1m8 0h1m3 0h1m3 0h1m3 0h1m7 0h1m3 0h1m3 0h1m3 0h1m5 0h1m3 0h1m3 0h1m3 0h1m7 0h1m3 0h1m3 0h1m3 0h1m8 0h1m2 0h1m3 0h1m4 0h1m7 0h1m3 0h1m3 0h1m4 0h1m-155 1h1m3 0h1m4 0h1m3 0h1m7 0h1m3 0h1m4 0h1m2 0h1m7 0h1m4 0h1m3 0h1m3 0h1m7 0h1m3 0h1m3 0h1m3 0h1m5 0h1m3 0h1m3 0h1m3 0h1m7 0h1m3 0h1m3 0h1m4 0h1m7 0h1m2 0h1m4 0h1m3 0h1m7 0h1m3 0h1m4 0h1m3 0h1m-151 1h1m3 0h1m4 0h1m7 0h1m3 0h1m3 0h1m3 0h1m7 0h1m3 0h1m3 0h1m4 0h1m7 0h1m3 0h1m3 0h1m3 0h1m5 0h1m3 0h1m3 0h1m3 0h1m7 0h1m4 0h1m3 0h1m3 0h1m7 0h1m3 0h1m3 0h1m3 0h1m7 0h1m4 0h1m3 0h1m-143 1h1m3 0h1m8 0h1m3 0h1m3 0h1m3 0h1m7 0h1m3 0h1m3 0h1m3 0h1m8 0h1m3 0h1m3 0h1m3 0h1m5 0h1m3 0h1m3 0h1m3 0h1m8 0h1m3 0h1m3 0h1m3 0h1m7 0h1m3 0h1m3 0h1m3 0h1m8 0h1m3 0h1m-135 1h1m8 0h1m3 0h1m3 0h1m3 0h1m7 0h1m3 0h1m3 0h1m3 0h1m8 0h1m3 0h1m3 0h1m3 0h1m5 0h1m3 0h1m3 0h1m3 0h1m8 0h1m3 0h1m3 0h1m3 0h1m7 0h1m3 0h1m3 0h1m3 0h1m8 0h1m-131 1h1m7 0h1m4 0h1m3 0h1m3 0h1m7 0h1m3 0h1m3 0h1m3 0h1m8 0h1m3 0h1m3 0h1m3 0h1m5 0h1m3 0h1m3 0h1m3 0h1m8 0h1m3 0h1m3 0h1m3 0h1m7 0h1m3 0h1m3 0h1m4 0h1m7 0h1m-123 1h1m3 0h1m4 0h1m2 0h1m8 0h1m3 0h1m3 0h1m3 0h1m7 0h1m4 0h1m3 0h1m3 0h1m5 0h1m3 0h1m3 0h1m4 0h1m7 0h1m3 0h1m3 0h1m3 0h1m8 0h1m2 0h1m4 0h1m3 0h1m-115 1h1m3 0h1m3 0h1m3 0h1m8 0h1m3 0h1m3 0h1m3 0h1m7 0h1m3 0h1m3 0h1m3 0h1m7 0h1m3 0h1m3 0h1m3 0h1m7 0h1m3 0h1m3 0h1m3 0h1m8 0h1m3 0h1m3 0h1m3 0h1m-111 1h1m3 0h1m3 0h1m7 0h1m4 0h1m3 0h1m3 0h1m7 0h1m3 0h1m3 0h1m3 0h1m7 0h1m3 0h1m3 0h1m3 0h1m7 0h1m3 0h1m3 0h1m4 0h1m7 0h1m3 0h1m3 0h1m-103 1h1m3 0h1m7 0h1m3 0h1m3 0h1m4 0h1m7 0h1m3 0h1m3 0h1m3 0h1m7 0h1m3 0h1m3 0h1m3 0h1m7 0h1m4 0h1m3 0h1m3 0h1m7 0h1m3 0h1m-87 1h1m3 0h1m3 0h1m3 0h1m8 0h1m3 0h1m3 0h1m3 0h1m7 0h1m3 0h1m3 0h1m3 0h1m8 0h1m3 0h1m3 0h1m3 0h1m-75 1h1m3 0h1m3 0h1m3 0h1m8 0h1m3 0h1m3 0h1m3 0h1m7 0h1m3 0h1m3 0h1m3 0h1m8 0h1m3 0h1m3 0h1m3 0h1m-71 1h1m3 0h1m3 0h1m8 0h1m3 0h1m3 0h1m3 0h1m7 0h1m3 0h1m3 0h1m3 0h1m8 0h1m3 0h1m3 0h1m-59 1h1m8 0h1m3 0h1m3 0h1m3 0h1m7 0h1m3 0h1m3 0h1m3 0h1m8 0h1m-38 1h1m3 0h1m3 0h1m7 0h1m3 0h1m3 0h1"/>
<path stroke="#fff" d="M299 60.5h1m-21 1h1m19 0h1m19 0h1m-41 1h1m19 0h1m19 0h1m-41 1h1m19 0h1m19 0h1m-62 1h1m20 0h1m19 0h1m19 0h1m20 0h1m-83 1h1m20 0h1m19 0h1m19 0h1m20 0h1m-83 1h1m20 0h1m19 0h1m19 0h1m20 0h1m-83 1h1m20 0h1m19 0h1m19 0h1m20 0h1m-103 1h1m20 0h1m20 0h1m18 0h1m18 0h1m20 0h1m20 0h1m-123 1h1m20 0h1m20 0h1m18 0h1m18 0h1m20 0h1m20 0h1m-123 1h1m20 0h1m20 0h1m18 0h1m18 0h1m20 0h1m20 0h1m-122 1h1m19 0h1m20 0h1m18 0h1m18 0h1m20 0h1m19 0h1m-121 1h1m19 0h1m20 0h1m18 0h1m18 0h1m20 0h1m19 0h1m-121 1h1m19 0h1m20 0h1m18 0h1m18 0h1m20 0h1m19 0h1m-121 1h1m19 0h1m20 0h1m18 0h1m18 0h1m20 0h1m19 0h1m-142 1h1m21 0h1m19 0h1m19 0h1m37 0h1m19 0h1m19 0h1m21 0h1m-163 1h1m21 0h1m19 0h1m77 0h1m19 0h1m21 0h1m-162 1h1m20 0h1m19 0h1m77 0h1m19 0h1m20 0h1m-161 1h1m20 0h1m19 0h1m77 0h1m19 0h1m20 0h1m-161 1h1m20 0h1m117 0h1m20 0h1m-160 1h1m20 0h1m115 0h1m20 0h1m-159 1h1m20 0h1m115 0h1m20 0h1m-159 1h1m20 0h1m115 0h1m20 0h1m-181 1h1m21 0h1m157 0h1m21 0h1m-202 1h1m21 0h1m155 0h1m21 0h1m-201 1h1m21 0h1m155 0h1m21 0h1m-200 1h1m20 0h1m155 0h1m20 0h1m-199 1h1m21 0h1m153 0h1m21 0h1m-198 1h1m20 0h1m153 0h1m20 0h1m-197 1h1m195 0h1m-196 1h1m193 0h1m-195 1h1m193 0h1m-217 1h1m22 0h1m191 0h1m22 0h1m-238 1h1m21 0h1m191 0h1m21 0h1m-237 1h1m22 0h1m189 0h1m22 0h1m-236 1h1m21 0h1m189 0h1m21 0h1m-235 1h1m233 0h1m-234 1h1m231 0h1m-232 1h1m229 0h1m-231 1h1m229 0h1m-230 1h1m227 0h1m-229 1h1m227 0h1m-228 1h1m225 0h1m-251 1h1m23 0h1m225 0h1m23 0h1m-274 1h1m23 0h1m223 0h1m23 0h1m-273 1h1m271 0h1m-272 1h1m269 0h1m-270 1h1m267 0h1m-269 1h1m267 0h1m-268 1h1m265 0h1m-266 1h1m263 0h1m-265 1h1m263 0h1m-264 1h1m261 0h1m-262 1h1m259 0h1m-261 1h1m259 0h1m-260 1h1m257 0h1m-283 1h1m305 0h1m-306 1h1m303 0h1m-304 1h1m301 0h1m-303 1h1m301 0h1m-302 1h1m299 0h1m-300 1h1m297 0h1m-298 1h1m295 0h1m-296 1h1m293 0h1m-294 1h1m291 0h1m-293 1h1m291 0h1m-292 1h1m289 0h1m-290 1h1m287 0h1m-314 3h1m337 0h1m-338 1h1m335 0h1m-336 1h1m333 0h1m-334 1h1m331 0h1m-332 1h1m329 0h1m-330 1h1m327 0h1m-328 1h1m325 0h1m-326 1h1m323 0h1m-324 1h1m321 0h1m-322 1h1m319 0h1m-320 1h1m317 0h1m-343 6h1m365 0h1m-366 1h1m363 0h1m-364 1h2m359 0h2m-361 1h1m357 0h1m-358 1h1m355 0h1m-356 1h1m353 0h1m-354 1h1m351 0h1m-352 1h2m347 0h2m-349 1h1m345 0h1m-346 1h1m343 0h1m-369 7h1m391 0h1m-392 1h2m387 0h2m-389 1h1m385 0h1m-386 1h2m381 0h2m-383 1h1m379 0h1m-380 1h2m375 0h2m-377 1h1m373 0h1m-374 1h2m369 0h2m-371 1h1m367 0h1m-392 10h1m413 0h1m-414 1h2m409 0h2m-411 1h2m405 0h2m-407 1h1m402 0h2m-404 1h2m399 0h1m-400 1h2m395 0h2m-397 1h2m391 0h2m-393 1h1m389 0h1m-412 11h1m430 0h2m-432 1h2m426 0h2m-428 1h2m422 0h2m-424 1h2m418 0h2m-420 1h2m414 0h2m-416 1h2m410 0h2m-412 1h2m407 0h1m-429 14h2m445 0h2m-447 1h3m439 0h3m-442 1h4m431 0h4m-435 1h3m425 0h3m-428 1h2m421 0h2m-444 16h3m457 0h3m-460 1h4m448 0h5m-453 1h5m439 0h4m-443 1h3m433 0h3m-455 17h4m463 0h4m-467 1h7m449 0h7m-456 1h4m441 0h4m-463 19h7m462 0h8m-470 1h8m447 0h7m-470 19h15m449 0h15m-471 19h8m447 0h7m-469 1h7m462 0h8m-463 19h4m441 0h4m-456 1h7m449 0h7m-467 1h4m463 0h4m-455 17h3m433 0h3m-444 1h5m439 0h4m-452 1h4m448 0h5m-460 1h3m457 0h3m-444 16h2m421 0h2m-428 1h3m425 0h3m-435 1h4m431 0h4m-442 1h3m439 0h3m-447 1h2m445 0h2m-430 14h2m407 0h1m-412 1h2m410 0h2m-416 1h2m414 0h2m-420 1h2m418 0h2m-424 1h2m422 0h2m-428 1h2m426 0h2m-431 1h1m430 0h2m-412 11h1m389 0h1m-393 1h2m391 0h2m-397 1h2m395 0h2m-401 1h2m399 0h1m-403 1h1m402 0h2m-407 1h2m405 0h2m-411 1h2m409 0h2m-414 1h1m413 0h1m-392 10h1m367 0h1m-371 1h2m369 0h2m-374 1h1m373 0h1m-377 1h2m375 0h2m-380 1h1m379 0h1m-383 1h2m381 0h2m-386 1h1m385 0h1m-389 1h2m387 0h2m-392 1h1m391 0h1m-369 7h1m343 0h1m-346 1h1m345 0h1m-349 1h2m347 0h2m-352 1h1m351 0h1m-354 1h1m353 0h1m-356 1h1m355 0h1m-358 1h1m357 0h1m-361 1h2m359 0h2m-364 1h1m363 0h1m-366 1h1m365 0h1m-343 6h1m317 0h1m-320 1h1m319 0h1m-322 1h1m321 0h1m-324 1h1m323 0h1m-326 1h1m325 0h1m-328 1h1m327 0h1m-330 1h1m329 0h1m-332 1h1m331 0h1m-334 1h1m333 0h1m-336 1h1m335 0h1m-338 1h1m337 0h1m-314 3h1m287 0h1m-290 1h1m289 0h1m-292 1h1m291 0h1m-293 1h1m291 0h1m-294 1h1m293 0h1m-296 1h1m295 0h1m-298 1h1m297 0h1m-300 1h1m299 0h1m-302 1h1m301 0h1m-303 1h1m301 0h1m-304 1h1m303 0h1m-306 1h1m305 0h1m-283 1h1m257 0h1m-260 1h1m259 0h1m-261 1h1m259 0h1m-262 1h1m261 0h1m-264 1h1m263 0h1m-265 1h1m263 0h1m-266 1h1m265 0h1m-268 1h1m267 0h1m-269 1h1m267 0h1m-270 1h1m269 0h1m-272 1h1m271 0h1m-273 1h1m23 0h1m223 0h1m23 0h1m-274 1h1m23 0h1m225 0h1m23 0h1m-251 1h1m225 0h1m-228 1h1m227 0h1m-229 1h1m227 0h1m-230 1h1m229 0h1m-232 1h1m231 0h1m-233 1h1m231 0h1m-234 1h1m233 0h1m-235 1h1m21 0h1m189 0h1m21 0h1m-236 1h1m21 0h1m191 0h1m21 0h1m-237 1h1m21 0h1m191 0h1m21 0h1m-238 1h1m21 0h1m193 0h1m21 0h1m-217 1h1m193 0h1m-196 1h1m195 0h1m-197 1h1m195 0h1m-198 1h1m21 0h1m153 0h1m21 0h1m-199 1h1m21 0h1m153 0h1m21 0h1m-200 1h1m21 0h1m155 0h1m21 0h1m-201 1h1m21 0h1m155 0h1m21 0h1m-202 1h1m22 0h1m155 0h1m22 0h1m-203 1h1m21 0h1m157 0h1m21 0h1m-181 1h1m20 0h1m115 0h1m20 0h1m-159 1h1m20 0h1m115 0h1m20 0h1m-159 1h1m20 0h1m115 0h1m20 0h1m-160 1h1m20 0h1m117 0h1m20 0h1m-161 1h1m20 0h1m19 0h1m77 0h1m19 0h1m20 0h1m-161 1h1m20 0h1m19 0h1m77 0h1m19 0h1m20 0h1m-162 1h1m21 0h1m19 0h1m77 0h1m19 0h1m21 0h1m-163 1h1m20 0h1m20 0h1m19 0h1m37 0h1m19 0h1m20 0h1m20 0h1m-142 1h1m19 0h1m20 0h1m18 0h1m18 0h1m20 0h1m19 0h1m-121 1h1m19 0h1m20 0h1m18 0h1m18 0h1m20 0h1m19 0h1m-121 1h1m19 0h1m20 0h1m18 0h1m18 0h1m20 0h1m19 0h1m-121 1h1m19 0h1m20 0h1m18 0h1m18 0h1m20 0h1m19 0h1m-122 1h1m20 0h1m20 0h1m18 0h1m18 0h1m20 0h1m20 0h1m-123 1h1m20 0h1m20 0h1m18 0h1m18 0h1m20 0h1m20 0h1m-123 1h1m20 0h1m19 0h1m19 0h1m19 0h1m19 0h1m20 0h1m-103 1h1m20 0h1m19 0h1m19 0h1m20 0h1m-83 1h1m20 0h1m19 0h1m19 0h1m20 0h1m-83 1h1m20 0h1m19 0h1m19 0h1m20 0h1m-83 1h1m20 0h1m19 0h1m19 0h1m20 0h1m-62 1h1m19 0h1m19 0h1m-41 1h1m19 0h1m19 0h1m-41 1h1m19 0h1m19 0h1m-21 1h1"/>
</g>
<g id="rings">
<path stroke="#fff" d="M285 15.5h28m-38 1h10m28 0h10m-58 1h10m48 0h10m-78 1h10m68 0h10m-95 1h7m88 0h8m-108 1h5m103 0h5m-118 1h5m113 0h5m-127 1h4m123 0h4m-135 1h4m131 0h4m-143 1h4m139 0h3m-149 1h3m146 0h4m-156 1h3m153 0h3m-162 1h3m159 0h3m-168 1h3m165 0h3m-174 1h3m171 0h3m-181 1h4m177 0h3m-187 1h3m184 0h4m-194 1h3m191 0h3m-199 1h2m197 0h2m-203 1h2m201 0h2m-207 1h2m205 0h2m-212 1h3m209 0h3m-217 1h2m215 0h2m-221 1h2m219 0h2m-225 1h2m223 0h2m-230 1h3m227 0h3m-235 1h2m233 0h2m-239 1h2m237 0h2m-243 1h2m241 0h2m-248 1h3m245 0h3m-253 1h2m251 0h2m-257 1h2m255 0h2m-261 1h2m259 0h2m-265 1h2m263 0h2m-269 1h2m267 0h2m-273 1h2m271 0h2m-277 1h2m275 0h2m-281 1h2m279 0h2m-284 1h1m283 0h1m-287 1h2m285 0h2m-291 1h2m289 0h1m-293 1h1m292 0h2m-297 1h2m295 0h2m-300 1h1m299 0h1m-303 1h2m301 0h2m-306 1h1m305 0h1m-309 1h2m307 0h2m-312 1h1m311 0h1m-315 1h2m313 0h2m-318 1h1m317 0h1m-321 1h2m319 0h2m-325 1h2m323 0h1m-327 1h1m326 0h2m-331 1h2m329 0h2m-334 1h1m333 0h1m-337 1h2m335 0h1m-339 1h1m338 0h2m-342 1h1m341 0h1m-345 1h2m343 0h1m-347 1h1m346 0h2m-350 1h1m349 0h1m-352 1h1m351 0h1m-354 1h1m353 0h1m-356 1h1m355 0h1m-358 1h1m357 0h1m-360 1h1m359 0h1m-362 1h1m361 0h1m-364 1h1m363 0h1m-367 1h2m365 0h1m-369 1h1m368 0h2m-372 1h1m371 0h1m-375 1h2m373 0h1m-377 1h1m376 0h2m-380 1h1m379 0h1m-382 1h1m381 0h1m-384 1h1m383 0h1m-386 1h1m385 0h1m-388 1h1m387 0h1m-390 1h1m389 0h1m-392 1h1m391 0h1m-394 1h1m393 0h1m-396 1h1m395 0h1m-398 1h1m397 0h1m-400 1h1m399 0h1m-402 1h1m401 0h1m-404 1h1m403 0h1m-406 1h1m405 0h1m-408 1h1m407 0h1m-410 1h1m409 0h1m-412 1h1m411 0h1m-414 1h1m413 0h1m-416 1h1m415 0h1m-418 1h1m417 0h1m-420 1h1m419 0h1m-422 1h1m421 0h1m-424 1h1m423 0h1m-426 1h1m425 0h1m-427 1h1m425 0h1m-428 1h1m427 0h1m-430 1h1m429 0h1m-432 1h1m431 0h1m-433 1h1m431 0h1m-434 1h1m433 0h1m-436 1h1m435 0h1m-438 1h1m437 0h1m-440 1h1m439 0h1m-442 1h1m441 0h1m-444 1h1m443 0h1m-446 1h1m445 0h1m-448 1h1m447 0h1m-450 1h1m449 0h1m-452 1h1m451 0h1m-453 1h1m451 0h1m-454 1h1m453 0h1m-456 1h1m455 0h1m-458 1h1m457 0h1m-459 1h1m457 0h1m-460 1h1m459 0h1m-462 1h1m461 0h1m-463 1h1m461 0h1m-464 1h1m463 0h1m-466 1h1m465 0h1m-467 1h1m465 0h1m-468 1h1m467 0h1m-469 1h1m467 0h1m-470 1h1m469 0h1m-472 1h1m471 0h1m-473 1h1m471 0h1m-474 1h1m473 0h1m-476 1h1m475 0h1m-477 1h1m475 0h1m-478 1h1m477 0h1m-480 1h1m479 0h1m-481 1h1m479 0h1m-482 1h1m481 0h1m-484 1h1m483 0h1m-485 1h1m483 0h1m-486 1h1m485 0h1m-488 1h1m487 0h1m-489 1h1m487 0h1m-490 1h1m489 0h1m-491 1h1m489 0h1m-492 1h1m491 0h1m-494 1h1m493 0h1m-495 1h1m493 0h1m-496 1h1m495 0h1m-497 1h1m495 0h1m-498 1h1m497 0h1m-499 1h1m497 0h1m-500 1h1m499 0h1m-501 1h1m499 0h1m-502 1h1m501 0h1m-503 1h1m501 0h1m-504 1h1m503 0h1m-505 1h1m503 0h1m-506 1h1m505 0h1m-507 1h1m505 0h1m-508 1h1m507 0h1m-509 1h1m507 0h1m-510 1h1m509 0h1m-511 1h1m509 0h1m-511 1h1m509 0h1m-512 1h1m511 0h1m-513 1h1m511 0h1m-514 1h1m513 0h1m-515 1h1m513 0h1m-516 1h1m515 0h1m-517 1h1m515 0h1m-518 1h1m517 0h1m-519 1h1m517 0h1m-519 1h1m517 0h1m-520 1h1m519 0h1m-521 1h1m519 0h1m-522 1h1m521 0h1m-523 1h1m521 0h1m-524 1h1m523 0h1m-525 1h1m523 0h1m-526 1h1m525 0h1m-527 1h1m525 0h1m-527 1h1m525 0h1m-528 1h1m527 0h1m-529 1h1m527 0h1m-530 1h1m529 0h1m-531 1h1m529 0h1m-532 1h1m531 0h1m-533 1h1m531 0h1m-534 1h1m533 0h1m-535 1h1m533 0h1m-535 1h1m533 0h1m-536 1h1m535 0h1m-537 1h1m535 0h1m-537 1h1m535 0h1m-538 1h1m537 0h1m-539 1h1m537 0h1m-539 1h1m537 0h1m-539 1h1m537 0h1m-540 1h1m539 0h1m-541 1h1m539 0h1m-541 1h1m539 0h1m-542 1h1m541 0h1m-543 1h1m541 0h1m-543 1h1m541 0h1m-544 1h1m543 0h1m-545 1h1m543 0h1m-545 1h1m543 0h1m-546 1h1m545 0h1m-547 1h1m545 0h1m-547 1h1m545 0h1m-548 1h1m547 0h1m-549 1h1m547 0h1m-549 1h1m547 0h1m-550 1h1m549 0h1m-551 1h1m549 0h1m-551 1h1m549 0h1m-551 1h1m549 0h1m-552 1h1m551 0h1m-553 1h1m551 0h1m-553 1h1m551 0h1m-553 1h1m551 0h1m-554 1h1m553 0h1m-555 1h1m553 0h1m-555 1h1m553 0h1m-555 1h1m553 0h1m-556 1h1m555 0h1m-557 1h1m555 0h1m-557 1h1m555 0h1m-557 1h1m555 0h1m-557 1h1m555 0h1m-558 1h1m557 0h1m-559 1h1m557 0h1m-559 1h1m557 0h1m-559 1h1m557 0h1m-559 1h1m557 0h1m-560 1h1m559 0h1m-561 1h1m559 0h1m-561 1h1m559 0h1m-561 1h1m559 0h1m-561 1h1m559 0h1m-561 1h1m559 0h1m-561 1h1m559 0h1m-562 1h1m561 0h1m-563 1h1m561 0h1m-563 1h1m561 0h1m-563 1h1m561 0h1m-563 1h1m561 0h1m-563 1h1m561 0h1m-563 1h1m561 0h1m-563 1h1m561 0h1m-563 1h1m561 0h1m-563 1h1m561 0h1m-564 1h1m563 0h1m-565 1h1m563 0h1m-565 1h1m563 0h1m-565 1h1m563 0h1m-565 1h1m563 0h1m-565 1h1m563 0h1m-565 1h1m563 0h1m-565 1h1m563 0h1m-565 1h1m563 0h1m-565 1h1m563 0h1m-566 1h1m565 0h1m-567 1h1m565 0h1m-567 1h1m565 0h1m-567 1h1m565 0h1m-567 1h1m565 0h1m-567 1h1m565 0h1m-567 1h1m565 0h1m-567 1h1m565 0h1m-567 1h1m565 0h1m-567 1h1m565 0h1m-568 1h1m567 0h1m-569 1h1m567 0h1m-569 1h1m567 0h1m-569 1h1m567 0h1m-569 1h1m567 0h1m-569 1h1m567 0h1m-569 1h1m567 0h1m-569 1h1m567 0h1m-569 1h1m567 0h1m-569 1h1m567 0h1m-569 1h1m567 0h1m-569 1h1m567 0h1m-569 1h1m567 0h1m-569 1h1m567 0h1m-569 1h1m567 0h1m-569 1h1m567 0h1m-569 1h1m567 0h1m-569 1h1m567 0h1m-569 1h1m567 0h1m-569 1h1m567 0h1m-569 1h1m567 0h1m-569 1h1m567 0h1m-569 1h1m567 0h1m-569 1h1m567 0h1m-569 1h1m567 0h1m-569 1h1m567 0h1m-569 1h1m567 0h1m-569 1h1m567 0h1m-568 1h1m565 0h1m-567 1h1m565 0h1m-567 1h1m565 0h1m-567 1h1m565 0h1m-567 1h1m565 0h1m-567 1h1m565 0h1m-567 1h1m565 0h1m-567 1h1m565 0h1m-567 1h1m565 0h1m-567 1h1m565 0h1m-566 1h1m563 0h1m-565 1h1m563 0h1m-565 1h1m563 0h1m-565 1h1m563 0h1m-565 1h1m563 0h1m-565 1h1m563 0h1m-565 1h1m563 0h1m-565 1h1m563 0h1m-565 1h1m563 0h1m-565 1h1m563 0h1m-564 1h1m561 0h1m-563 1h1m561 0h1m-563 1h1m561 0h1m-563 1h1m561 0h1m-563 1h1m561 0h1m-563 1h1m561 0h1m-563 1h1m561 0h1m-563 1h1m561 0h1m-563 1h1m561 0h1m-563 1h1m561 0h1m-562 1h1m559 0h1m-561 1h1m559 0h1m-561 1h1m559 0h1m-561 1h1m559 0h1m-561 1h1m559 0h1m-561 1h1m559 0h1m-561 1h1m559 0h1m-561 1h1m559 0h1m-560 1h1m557 0h1m-559 1h1m557 0h1m-559 1h1m557 0h1m-559 1h1m557 0h1m-559 1h1m557 0h1m-558 1h1m555 0h1m-557 1h1m555 0h1m-557 1h1m555 0h1m-557 1h1m555 0h1m-557 1h1m555 0h1m-556 1h1m553 0h1m-555 1h1m553 0h1m-555 1h1m553 0h1m-555 1h1m553 0h1m-554 1h1m551 0h1m-553 1h1m551 0h1m-553 1h1m551 0h1m-553 1h1m551 0h1m-552 1h1m549 0h1m-551 1h1m549 0h1m-551 1h1m549 0h1m-550 1h1m547 0h1m-549 1h1m547 0h1m-549 1h1m547 0h1m-549 1h1m547 0h1m-548 1h1m545 0h1m-547 1h1m545 0h1m-547 1h1m545 0h1m-546 1h1m543 0h1m-545 1h1m543 0h1m-545 1h1m543 0h1m-544 1h1m541 0h1m-543 1h1m541 0h1m-543 1h1m541 0h1m-542 1h1m539 0h1m-541 1h1m539 0h1m-541 1h1m539 0h1m-540 1h1m537 0h1m-539 1h1m537 0h1m-539 1h1m537 0h1m-538 1h1m535 0h1m-537 1h1m535 0h1m-537 1h1m535 0h1m-537 1h1m535 0h1m-536 1h1m533 0h1m-535 1h1m533 0h1m-535 1h1m533 0h1m-534 1h1m531 0h1m-533 1h1m531 0h1m-532 1h1m529 0h1m-531 1h1m529 0h1m-530 1h1m527 0h1m-529 1h1m527 0h1m-528 1h1m525 0h1m-527 1h1m525 0h1m-527 1h1m525 0h1m-526 1h1m523 0h1m-525 1h1m523 0h1m-524 1h1m521 0h1m-523 1h1m521 0h1m-522 1h1m519 0h1m-521 1h1m519 0h1m-520 1h1m517 0h1m-519 1h1m517 0h1m-519 1h1m517 0h1m-518 1h1m515 0h1m-517 1h1m515 0h1m-516 1h1m513 0h1m-515 1h1m513 0h1m-514 1h1m511 0h1m-513 1h1m511 0h1m-512 1h1m509 0h1m-511 1h1m509 0h1m-511 1h1m509 0h1m-510 1h1m507 0h1m-509 1h1m507 0h1m-508 1h1m505 0h1m-507 1h1m505 0h1m-506 1h1m503 0h1m-505 1h1m503 0h1m-504 1h1m501 0h1m-503 1h1m501 0h1m-502 1h1m499 0h1m-501 1h1m499 0h1m-500 1h1m497 0h1m-499 1h1m497 0h1m-498 1h1m495 0h1m-497 1h1m495 0h1m-496 1h1m493 0h1m-495 1h1m493 0h1m-494 1h1m491 0h1m-492 1h1m489 0h1m-491 1h1m489 0h1m-490 1h1m487 0h1m-488 1h1m485 0h1m-487 1h1m485 0h1m-486 1h1m483 0h1m-485 1h1m483 0h1m-484 1h1m481 0h1m-482 1h1m479 0h1m-481 1h1m479 0h1m-480 1h1m477 0h1m-478 1h1m475 0h1m-477 1h1m475 0h1m-476 1h1m473 0h1m-474 1h1m471 0h1m-473 1h1m471 0h1m-472 1h1m469 0h1m-470 1h1m467 0h1m-469 1h1m467 0h1m-468 1h1m465 0h1m-466 1h1m463 0h1m-465 1h1m463 0h1m-464 1h1m461 0h1m-463 1h1m461 0h1m-462 1h1m459 0h1m-460 1h1m457 0h1m-458 1h1m455 0h1m-457 1h1m455 0h1m-456 1h1m453 0h1m-454 1h1m451 0h1m-452 1h1m449 0h1m-451 1h1m449 0h1m-450 1h1m447 0h1m-448 1h1m445 0h1m-446 1h1m443 0h1m-444 1h1m441 0h1m-442 1h1m439 0h1m-440 1h1m437 0h1m-438 1h1m435 0h1m-436 1h1m433 0h1m-434 1h1m431 0h1m-432 1h1m429 0h1m-431 1h1m429 0h1m-430 1h1m427 0h1m-428 1h1m425 0h1m-426 1h1m423 0h1m-425 1h1m423 0h1m-424 1h1m421 0h1m-422 1h1m419 0h1m-420 1h1m417 0h1m-418 1h1m415 0h1m-416 1h1m413 0h1m-414 1h1m411 0h1m-412 1h1m409 0h1m-410 1h1m407 0h1m-408 1h1m405 0h1m-406 1h1m403 0h1m-404 1h1m401 0h1m-402 1h1m399 0h1m-400 1h1m397 0h1m-398 1h1m395 0h1m-396 1h1m393 0h1m-394 1h1m391 0h1m-392 1h1m389 0h1m-390 1h1m387 0h1m-388 1h1m385 0h1m-386 1h1m383 0h1m-384 1h1m381 0h1m-382 1h1m379 0h1m-380 1h1m376 0h2m-378 1h2m373 0h1m-374 1h1m371 0h1m-372 1h1m368 0h2m-370 1h2m365 0h1m-366 1h1m363 0h1m-364 1h1m361 0h1m-362 1h1m359 0h1m-360 1h1m357 0h1m-358 1h1m355 0h1m-356 1h1m353 0h1m-354 1h1m351 0h1m-352 1h1m349 0h1m-350 1h1m346 0h2m-348 1h2m343 0h1m-344 1h1m341 0h1m-342 1h1m338 0h2m-340 1h2m335 0h1m-336 1h1m333 0h1m-334 1h2m329 0h2m-331 1h1m326 0h2m-328 1h2m323 0h1m-324 1h2m319 0h2m-321 1h1m317 0h1m-318 1h2m313 0h2m-315 1h1m311 0h1m-312 1h2m307 0h2m-309 1h1m305 0h1m-306 1h2m301 0h2m-303 1h1m299 0h1m-300 1h2m295 0h2m-297 1h1m292 0h2m-294 1h2m289 0h1m-290 1h2m285 0h2m-287 1h1m283 0h1m-284 1h2m279 0h2m-281 1h2m275 0h2m-277 1h2m271 0h2m-273 1h2m267 0h2m-269 1h2m263 0h2m-265 1h2m259 0h2m-261 1h2m255 0h2m-257 1h2m251 0h2m-253 1h3m245 0h3m-248 1h2m241 0h2m-243 1h2m237 0h2m-239 1h2m233 0h2m-235 1h3m227 0h3m-230 1h2m223 0h2m-225 1h2m219 0h2m-221 1h2m215 0h2m-217 1h3m209 0h3m-212 1h2m205 0h2m-207 1h2m201 0h2m-203 1h2m197 0h2m-199 1h3m191 0h3m-194 1h3m184 0h4m-188 1h4m177 0h3m-180 1h3m171 0h3m-174 1h3m165 0h3m-168 1h3m159 0h3m-162 1h3m153 0h3m-156 1h3m146 0h4m-150 1h4m139 0h3m-142 1h4m131 0h4m-135 1h4m123 0h4m-127 1h5m113 0h5m-118 1h5m103 0h5m-108 1h7m88 0h8m-96 1h10m68 0h10m-78 1h10m48 0h10m-58 1h10m28 0h10m-38 1h28"/>
<path stroke="#fff" d="M287 60.5h24m-41 1h17m24 0h17m-64 1h6m58 0h6m-74 1h4m70 0h4m-84 1h6m78 0h6m-96 1h6m90 0h6m-106 1h4m102 0h4m-114 1h4m110 0h5m-123 1h4m119 0h4m-131 1h4m127 0h4m-138 1h3m135 0h2m-142 1h2m140 0h3m-148 1h3m145 0h3m-155 1h4m151 0h4m-162 1h3m159 0h3m-168 1h3m165 0h2m-172 1h2m170 0h3m-178 1h3m175 0h2m-182 1h2m180 0h2m-186 1h2m184 0h2m-190 1h2m188 0h2m-194 1h2m192 0h3m-199 1h2m197 0h2m-203 1h2m201 0h2m-208 1h3m205 0h2m-212 1h2m210 0h2m-216 1h2m214 0h2m-220 1h2m218 0h2m-223 1h1m222 0h2m-227 1h2m225 0h2m-231 1h2m229 0h2m-235 1h2m233 0h2m-238 1h1m237 0h1m-241 1h2m239 0h2m-245 1h2m243 0h2m-249 1h2m247 0h2m-252 1h1m251 0h1m-255 1h2m253 0h2m-258 1h1m257 0h1m-260 1h1m259 0h1m-263 1h2m261 0h2m-266 1h1m265 0h1m-269 1h2m267 0h2m-272 1h1m271 0h1m-274 1h1m273 0h1m-277 1h2m275 0h2m-280 1h1m279 0h1m-283 1h2m281 0h2m-286 1h1m285 0h1m-288 1h1m287 0h1m-291 1h2m289 0h2m-294 1h1m293 0h1m-296 1h1m295 0h1m-299 1h2m297 0h1m-301 1h1m300 0h2m-304 1h1m303 0h1m-306 1h1m305 0h1m-308 1h1m307 0h1m-310 1h1m309 0h1m-313 1h2m311 0h2m-316 1h1m315 0h1m-318 1h1m317 0h1m-320 1h1m319 0h1m-322 1h1m321 0h1m-325 1h2m323 0h1m-327 1h1m326 0h2m-330 1h1m329 0h1m-332 1h1m331 0h1m-334 1h1m333 0h1m-336 1h1m335 0h1m-338 1h1m337 0h1m-340 1h1m339 0h1m-342 1h1m341 0h1m-344 1h1m343 0h1m-346 1h1m345 0h1m-348 1h1m347 0h1m-350 1h1m349 0h1m-351 1h1m349 0h1m-352 1h1m351 0h1m-354 1h1m353 0h1m-356 1h1m355 0h1m-358 1h1m357 0h1m-360 1h1m359 0h1m-361 1h1m359 0h1m-362 1h1m361 0h1m-364 1h1m363 0h1m-366 1h1m365 0h1m-368 1h1m367 0h1m-370 1h1m369 0h1m-372 1h1m371 0h1m-373 1h1m371 0h1m-374 1h1m373 0h1m-376 1h1m375 0h1m-378 1h1m377 0h1m-379 1h1m377 0h1m-380 1h1m379 0h1m-382 1h1m381 0h1m-384 1h1m383 0h1m-385 1h1m383 0h1m-386 1h1m385 0h1m-388 1h1m387 0h1m-389 1h1m387 0h1m-390 1h1m389 0h1m-392 1h1m391 0h1m-394 1h1m393 0h1m-395 1h1m393 0h1m-396 1h1m395 0h1m-398 1h1m397 0h1m-399 1h1m397 0h1m-400 1h1m399 0h1m-402 1h1m401 0h1m-404 1h1m403 0h1m-405 1h1m403 0h1m-406 1h1m405 0h1m-408 1h1m407 0h1m-409 1h1m407 0h1m-410 1h1m409 0h1m-411 1h1m409 0h1m-412 1h1m411 0h1m-413 1h1m411 0h1m-414 1h1m413 0h1m-416 1h1m415 0h1m-417 1h1m415 0h1m-418 1h1m417 0h1m-419 1h1m417 0h1m-420 1h1m419 0h1m-421 1h1m419 0h1m-422 1h1m421 0h1m-424 1h1m423 0h1m-425 1h1m423 0h1m-426 1h1m425 0h1m-427 1h1m425 0h1m-428 1h1m427 0h1m-429 1h1m427 0h1m-430 1h1m429 0h1m-431 1h1m429 0h1m-431 1h1m429 0h1m-432 1h1m431 0h1m-433 1h1m431 0h1m-434 1h1m433 0h1m-435 1h1m433 0h1m-436 1h1m435 0h1m-437 1h1m435 0h1m-438 1h1m437 0h1m-439 1h1m437 0h1m-440 1h1m439 0h1m-441 1h1m439 0h1m-442 1h1m441 0h1m-443 1h1m441 0h1m-444 1h1m443 0h1m-445 1h1m443 0h1m-445 1h1m443 0h1m-446 1h1m445 0h1m-447 1h1m445 0h1m-448 1h1m447 0h1m-449 1h1m447 0h1m-449 1h1m447 0h1m-450 1h1m449 0h1m-451 1h1m449 0h1m-451 1h1m449 0h1m-452 1h1m451 0h1m-453 1h1m451 0h1m-453 1h1m451 0h1m-453 1h1m451 0h1m-454 1h1m453 0h1m-455 1h1m453 0h1m-455 1h1m453 0h1m-456 1h1m455 0h1m-457 1h1m455 0h1m-458 1h1m457 0h1m-459 1h1m457 0h1m-459 1h1m457 0h1m-460 1h1m459 0h1m-461 1h1m459 0h1m-461 1h1m459 0h1m-461 1h1m459 0h1m-462 1h1m461 0h1m-463 1h1m461 0h1m-463 1h1m461 0h1m-463 1h1m461 0h1m-464 1h1m463 0h1m-465 1h1m463 0h1m-465 1h1m463 0h1m-465 1h1m463 0h1m-466 1h1m465 0h1m-467 1h1m465 0h1m-467 1h1m465 0h1m-467 1h1m465 0h1m-468 1h1m467 0h1m-469 1h1m467 0h1m-469 1h1m467 0h1m-469 1h1m467 0h1m-469 1h1m467 0h1m-469 1h1m467 0h1m-470 1h1m469 0h1m-471 1h1m469 0h1m-471 1h1m469 0h1m-471 1h1m469 0h1m-471 1h1m469 0h1m-471 1h1m469 0h1m-472 1h1m471 0h1m-473 1h1m471 0h1m-473 1h1m471 0h1m-473 1h1m471 0h1m-474 1h1m473 0h1m-475 1h1m473 0h1m-475 1h1m473 0h1m-475 1h1m473 0h1m-475 1h1m473 0h1m-475 1h1m473 0h1m-476 1h1m475 0h1m-477 1h1m475 0h1m-477 1h1m475 0h1m-477 1h1m475 0h1m-477 1h1m475 0h1m-477 1h1m475 0h1m-477 1h1m475 0h1m-477 1h1m475 0h1m-477 1h1m475 0h1m-477 1h1m475 0h1m-477 1h1m475 0h1m-477 1h1m475 0h1m-477 1h1m475 0h1m-477 1h1m475 0h1m-477 1h1m475 0h1m-477 1h1m475 0h1m-477 1h1m475 0h1m-478 1h1m477 0h1m-479 1h1m477 0h1m-479 1h1m477 0h1m-479 1h1m477 0h1m-479 1h1m477 0h1m-479 1h1m477 0h1m-479 1h1m477 0h1m-479 1h1m477 0h1m-479 1h1m477 0h1m-479 1h1m477 0h1m-479 1h1m477 0h1m-479 1h1m477 0h1m-479 1h1m477 0h1m-479 1h1m477 0h1m-479 1h1m477 0h1m-479 1h1m477 0h1m-479 1h1m477 0h1m-479 1h1m477 0h1m-479 1h1m477 0h1m-479 1h1m477 0h1m-479 1h1m477 0h1m-479 1h1m477 0h1m-479 1h1m477 0h1m-479 1h1m477 0h1m-478 1h1m475 0h1m-477 1h1m475 0h1m-477 1h1m475 0h1m-477 1h1m475 0h1m-477 1h1m475 0h1m-477 1h1m475 0h1m-477 1h1m475 0h1m-477 1h1m475 0h1m-477 1h1m475 0h1m-477 1h1m475 0h1m-477 1h1m475 0h1m-477 1h1m475 0h1m-477 1h1m475 0h1m-477 1h1m475 0h1m-477 1h1m475 0h1m-477 1h1m475 0h1m-477 1h1m475 0h1m-476 1h1m473 0h1m-475 1h1m473 0h1m-475 1h1m473 0h1m-475 1h1m473 0h1m-475 1h1m473 0h1m-475 1h1m473 0h1m-474 1h1m471 0h1m-473 1h1m471 0h1m-473 1h1m471 0h1m-473 1h1m471 0h1m-472 1h1m469 0h1m-471 1h1m469 0h1m-471 1h1m469 0h1m-471 1h1m469 0h1m-471 1h1m469 0h1m-471 1h1m469 0h1m-470 1h1m467 0h1m-469 1h1m467 0h1m-469 1h1m467 0h1m-469 1h1m467 0h1m-469 1h1m467 0h1m-469 1h1m467 0h1m-468 1h1m465 0h1m-467 1h1m465 0h1m-467 1h1m465 0h1m-467 1h1m465 0h1m-466 1h1m463 0h1m-465 1h1m463 0h1m-465 1h1m463 0h1m-465 1h1m463 0h1m-465 1h1m463 0h1m-464 1h1m461 0h1m-463 1h1m461 0h1m-463 1h1m461 0h1m-463 1h1m461 0h1m-462 1h1m459 0h1m-461 1h1m459 0h1m-461 1h1m459 0h1m-461 1h1m459 0h1m-460 1h1m457 0h1m-459 1h1m457 0h1m-458 1h1m455 0h1m-457 1h1m455 0h1m-457 1h1m455 0h1m-456 1h1m453 0h1m-455 1h1m453 0h1m-455 1h1m453 0h1m-454 1h1m451 0h1m-453 1h1m451 0h1m-453 1h1m451 0h1m-453 1h1m451 0h1m-452 1h1m449 0h1m-451 1h1m449 0h1m-451 1h1m449 0h1m-450 1h1m447 0h1m-449 1h1m447 0h1m-448 1h1m445 0h1m-447 1h1m445 0h1m-447 1h1m445 0h1m-446 1h1m443 0h1m-445 1h1m443 0h1m-444 1h1m441 0h1m-443 1h1m441 0h1m-442 1h1m439 0h1m-441 1h1m439 0h1m-440 1h1m437 0h1m-439 1h1m437 0h1m-438 1h1m435 0h1m-437 1h1m435 0h1m-437 1h1m435 0h1m-436 1h1m433 0h1m-435 1h1m433 0h1m-434 1h1m431 0h1m-433 1h1m431 0h1m-432 1h1m429 0h1m-431 1h1m429 0h1m-430 1h1m427 0h1m-429 1h1m427 0h1m-428 1h1m425 0h1m-427 1h1m425 0h1m-426 1h1m423 0h1m-425 1h1m423 0h1m-424 1h1m421 0h1m-423 1h1m421 0h1m-422 1h1m419 0h1m-421 1h1m419 0h1m-420 1h1m417 0h1m-419 1h1m417 0h1m-418 1h1m415 0h1m-417 1h1m415 0h1m-416 1h1m413 0h1m-414 1h1m411 0h1m-413 1h1m411 0h1m-412 1h1m409 0h1m-411 1h1m409 0h1m-410 1h1m407 0h1m-409 1h1m407 0h1m-408 1h1m405 0h1m-406 1h1m403 0h1m-405 1h1m403 0h1m-404 1h1m401 0h1m-402 1h1m399 0h1m-400 1h1m397 0h1m-399 1h1m397 0h1m-398 1h1m395 0h1m-396 1h1m393 0h1m-395 1h1m393 0h1m-394 1h1m391 0h1m-392 1h1m389 0h1m-390 1h1m387 0h1m-389 1h1m387 0h1m-388 1h1m385 0h1m-386 1h1m383 0h1m-385 1h1m383 0h1m-384 1h1m381 0h1m-382 1h1m379 0h1m-380 1h1m377 0h1m-379 1h1m377 0h1m-378 1h1m375 0h1m-376 1h1m373 0h1m-374 1h1m371 0h1m-372 1h1m369 0h1m-371 1h1m369 0h1m-370 1h1m367 0h1m-368 1h1m365 0h1m-366 1h1m363 0h1m-364 1h1m361 0h1m-362 1h1m359 0h1m-361 1h1m359 0h1m-360 1h1m357 0h1m-358 1h1m355 0h1m-356 1h1m353 0h1m-354 1h1m351 0h1m-352 1h1m349 0h1m-350 1h1m347 0h1m-349 1h1m347 0h1m-348 1h1m345 0h1m-346 1h1m343 0h1m-344 1h1m341 0h1m-342 1h1m339 0h1m-340 1h1m337 0h1m-338 1h1m335 0h1m-336 1h1m333 0h1m-334 1h1m331 0h1m-332 1h1m329 0h1m-330 1h1m326 0h2m-328 1h2m323 0h1m-324 1h1m321 0h1m-322 1h1m319 0h1m-320 1h1m317 0h1m-318 1h1m315 0h1m-316 1h2m311 0h2m-313 1h1m309 0h1m-310 1h1m307 0h1m-308 1h1m305 0h1m-306 1h1m303 0h1m-304 1h1m300 0h2m-302 1h2m297 0h1m-298 1h1m295 0h1m-296 1h1m293 0h1m-294 1h2m289 0h2m-291 1h1m287 0h1m-288 1h1m285 0h1m-286 1h2m281 0h2m-283 1h1m279 0h1m-280 1h2m275 0h2m-277 1h1m273 0h1m-274 1h1m271 0h1m-272 1h2m267 0h2m-269 1h1m265 0h1m-266 1h2m261 0h2m-263 1h1m259 0h1m-260 1h1m257 0h1m-258 1h2m253 0h2m-255 1h1m251 0h1m-252 1h2m247 0h2m-249 1h2m243 0h2m-245 1h2m239 0h2m-241 1h1m237 0h1m-238 1h2m233 0h2m-235 1h2m229 0h2m-231 1h2m225 0h2m-227 1h1m222 0h2m-224 1h2m218 0h2m-220 1h2m214 0h2m-216 1h2m210 0h2m-212 1h3m205 0h2m-207 1h2m201 0h2m-203 1h2m197 0h2m-199 1h2m192 0h3m-195 1h2m188 0h2m-190 1h2m184 0h2m-186 1h2m180 0h2m-182 1h3m175 0h2m-177 1h2m170 0h3m-173 1h3m165 0h2m-167 1h3m159 0h3m-162 1h4m151 0h4m-155 1h3m145 0h3m-148 1h2m140 0h3m-143 1h3m135 0h2m-137 1h4m127 0h4m-131 1h4m119 0h4m-123 1h4m110 0h5m-115 1h4m102 0h4m-106 1h6m90 0h6m-96 1h6m78 0h6m-84 1h4m70 0h4m-74 1h6m58 0h6m-64 1h17m24 0h17m-41 1h24"/>
<path stroke="#fff" d="M288 75.5h22m-38 1h16m22 0h16m-61 1h7m54 0h8m-75 1h6m69 0h5m-84 1h4m80 0h4m-92 1h4m88 0h4m-100 1h4m96 0h4m-107 1h3m104 0h4m-115 1h4m111 0h4m-123 1h4m119 0h3m-130 1h4m126 0h4m-137 1h3m134 0h4m-143 1h2m141 0h2m-147 1h2m145 0h2m-153 1h4m149 0h3m-160 1h4m156 0h4m-167 1h3m164 0h4m-173 1h2m171 0h2m-177 1h2m175 0h2m-181 1h2m179 0h2m-185 1h2m183 0h2m-189 1h2m187 0h2m-193 1h2m191 0h2m-197 1h2m195 0h2m-201 1h2m199 0h2m-205 1h2m203 0h2m-209 1h2m207 0h2m-213 1h2m211 0h2m-217 1h2m215 0h2m-221 1h2m219 0h2m-224 1h1m223 0h1m-227 1h2m225 0h2m-230 1h1m229 0h1m-233 1h2m231 0h2m-236 1h1m235 0h1m-239 1h2m237 0h2m-243 1h2m241 0h2m-247 1h2m245 0h2m-250 1h1m249 0h1m-252 1h1m251 0h1m-255 1h2m253 0h1m-257 1h1m256 0h2m-260 1h1m259 0h1m-262 1h1m261 0h1m-265 1h2m263 0h2m-268 1h1m267 0h1m-270 1h1m269 0h1m-273 1h2m271 0h2m-276 1h1m275 0h1m-278 1h1m277 0h1m-281 1h2m279 0h1m-283 1h1m282 0h2m-286 1h1m285 0h1m-288 1h1m287 0h1m-290 1h1m289 0h1m-293 1h2m291 0h1m-295 1h1m294 0h2m-298 1h1m297 0h1m-300 1h1m299 0h1m-302 1h1m301 0h1m-304 1h1m303 0h1m-306 1h1m305 0h1m-308 1h1m307 0h1m-310 1h1m309 0h1m-312 1h1m311 0h1m-314 1h1m313 0h1m-316 1h1m315 0h1m-318 1h1m317 0h1m-320 1h1m319 0h1m-322 1h1m321 0h1m-324 1h1m323 0h1m-326 1h1m325 0h1m-328 1h1m327 0h1m-330 1h1m329 0h1m-332 1h1m331 0h1m-334 1h1m333 0h1m-336 1h1m335 0h1m-338 1h1m337 0h1m-339 1h1m337 0h1m-340 1h1m339 0h1m-342 1h1m341 0h1m-344 1h1m343 0h1m-346 1h1m345 0h1m-348 1h1m347 0h1m-349 1h1m347 0h1m-350 1h1m349 0h1m-352 1h1m351 0h1m-354 1h1m353 0h1m-355 1h1m353 0h1m-356 1h1m355 0h1m-358 1h1m357 0h1m-360 1h1m359 0h1m-361 1h1m359 0h1m-362 1h1m361 0h1m-364 1h1m363 0h1m-366 1h1m365 0h1m-368 1h1m367 0h1m-369 1h1m367 0h1m-370 1h1m369 0h1m-372 1h1m371 0h1m-374 1h1m373 0h1m-375 1h1m373 0h1m-376 1h1m375 0h1m-377 1h1m375 0h1m-378 1h1m377 0h1m-379 1h1m377 0h1m-380 1h1m379 0h1m-382 1h1m381 0h1m-383 1h1m381 0h1m-384 1h1m383 0h1m-386 1h1m385 0h1m-387 1h1m385 0h1m-388 1h1m387 0h1m-390 1h1m389 0h1m-391 1h1m389 0h1m-392 1h1m391 0h1m-393 1h1m391 0h1m-394 1h1m393 0h1m-395 1h1m393 0h1m-396 1h1m395 0h1m-397 1h1m395 0h1m-398 1h1m397 0h1m-399 1h1m397 0h1m-400 1h1m399 0h1m-401 1h1m399 0h1m-402 1h1m401 0h1m-403 1h1m401 0h1m-404 1h1m403 0h1m-405 1h1m403 0h1m-406 1h1m405 0h1m-407 1h1m405 0h1m-408 1h1m407 0h1m-409 1h1m407 0h1m-410 1h1m409 0h1m-411 1h1m409 0h1m-412 1h1m411 0h1m-413 1h1m411 0h1m-414 1h1m413 0h1m-415 1h1m413 0h1m-416 1h1m415 0h1m-417 1h1m415 0h1m-417 1h1m415 0h1m-418 1h1m417 0h1m-419 1h1m417 0h1m-419 1h1m417 0h1m-419 1h1m417 0h1m-420 1h1m419 0h1m-421 1h1m419 0h1m-421 1h1m419 0h1m-421 1h1m419 0h1m-422 1h1m421 0h1m-423 1h1m421 0h1m-424 1h1m423 0h1m-425 1h1m423 0h1m-426 1h1m425 0h1m-427 1h1m425 0h1m-427 1h1m425 0h1m-428 1h1m427 0h1m-429 1h1m427 0h1m-429 1h1m427 0h1m-429 1h1m427 0h1m-430 1h1m429 0h1m-431 1h1m429 0h1m-431 1h1m429 0h1m-431 1h1m429 0h1m-432 1h1m431 0h1m-433 1h1m431 0h1m-433 1h1m431 0h1m-433 1h1m431 0h1m-434 1h1m433 0h1m-435 1h1m433 0h1m-435 1h1m433 0h1m-436 1h1m435 0h1m-437 1h1m435 0h1m-437 1h1m435 0h1m-437 1h1m435 0h1m-438 1h1m437 0h1m-439 1h1m437 0h1m-439 1h1m437 0h1m-439 1h1m437 0h1m-440 1h1m439 0h1m-441 1h1m439 0h1m-441 1h1m439 0h1m-441 1h1m439 0h1m-442 1h1m441 0h1m-443 1h1m441 0h1m-443 1h1m441 0h1m-443 1h1m441 0h1m-443 1h1m441 0h1m-443 1h1m441 0h1m-444 1h1m443 0h1m-445 1h1m443 0h1m-445 1h1m443 0h1m-445 1h1m443 0h1m-445 1h1m443 0h1m-445 1h1m443 0h1m-445 1h1m443 0h1m-446 1h1m445 0h1m-447 1h1m445 0h1m-447 1h1m445 0h1m-447 1h1m445 0h1m-447 1h1m445 0h1m-447 1h1m445 0h1m-447 1h1m445 0h1m-447 1h1m445 0h1m-447 1h1m445 0h1m-447 1h1m445 0h1m-447 1h1m445 0h1m-447 1h1m445 0h1m-447 1h1m445 0h1m-447 1h1m445 0h1m-447 1h1m445 0h1m-447 1h1m445 0h1m-448 1h1m447 0h1m-449 1h1m447 0h1m-449 1h1m447 0h1m-449 1h1m447 0h1m-449 1h1m447 0h1m-449 1h1m447 0h1m-449 1h1m447 0h1m-449 1h1m447 0h1m-449 1h1m447 0h1m-449 1h1m447 0h1m-449 1h1m447 0h1m-449 1h1m447 0h1m-449 1h1m447 0h1m-449 1h1m447 0h1m-449 1h1m447 0h1m-449 1h1m447 0h1m-449 1h1m447 0h1m-449 1h1m447 0h1m-449 1h1m447 0h1m-449 1h1m447 0h1m-449 1h1m447 0h1m-449 1h1m447 0h1m-448 1h1m445 0h1m-447 1h1m445 0h1m-447 1h1m445 0h1m-447 1h1m445 0h1m-447 1h1m445 0h1m-447 1h1m445 0h1m-447 1h1m445 0h1m-447 1h1m445 0h1m-447 1h1m445 0h1m-447 1h1m445 0h1m-447 1h1m445 0h1m-447 1h1m445 0h1m-447 1h1m445 0h1m-447 1h1m445 0h1m-447 1h1m445 0h1m-447 1h1m445 0h1m-446 1h1m443 0h1m-445 1h1m443 0h1m-445 1h1m443 0h1m-445 1h1m443 0h1m-445 1h1m443 0h1m-445 1h1m443 0h1m-445 1h1m443 0h1m-445 1h1m443 0h1m-444 1h1m441 0h1m-443 1h1m441 0h1m-443 1h1m441 0h1m-443 1h1m441 0h1m-443 1h1m441 0h1m-442 1h1m439 0h1m-441 1h1m439 0h1m-441 1h1m439 0h1m-441 1h1m439 0h1m-440 1h1m437 0h1m-439 1h1m437 0h1m-439 1h1m437 0h1m-439 1h1m437 0h1m-438 1h1m435 0h1m-437 1h1m435 0h1m-437 1h1m435 0h1m-437 1h1m435 0h1m-436 1h1m433 0h1m-435 1h1m433 0h1m-435 1h1m433 0h1m-435 1h1m433 0h1m-434 1h1m431 0h1m-433 1h1m431 0h1m-433 1h1m431 0h1m-433 1h1m431 0h1m-432 1h1m429 0h1m-431 1h1m429 0h1m-431 1h1m429 0h1m-430 1h1m427 0h1m-429 1h1m427 0h1m-429 1h1m427 0h1m-429 1h1m427 0h1m-428 1h1m425 0h1m-427 1h1m425 0h1m-427 1h1m425 0h1m-427 1h1m425 0h1m-426 1h1m423 0h1m-425 1h1m423 0h1m-424 1h1m421 0h1m-423 1h1m421 0h1m-422 1h1m419 0h1m-421 1h1m419 0h1m-421 1h1m419 0h1m-420 1h1m417 0h1m-419 1h1m417 0h1m-419 1h1m417 0h1m-419 1h1m417 0h1m-418 1h1m415 0h1m-417 1h1m415 0h1m-417 1h1m415 0h1m-417 1h1m415 0h1m-416 1h1m413 0h1m-415 1h1m413 0h1m-414 1h1m411 0h1m-413 1h1m411 0h1m-412 1h1m409 0h1m-411 1h1m409 0h1m-410 1h1m407 0h1m-409 1h1m407 0h1m-408 1h1m405 0h1m-407 1h1m405 0h1m-406 1h1m403 0h1m-405 1h1m403 0h1m-404 1h1m401 0h1m-403 1h1m401 0h1m-402 1h1m399 0h1m-401 1h1m399 0h1m-400 1h1m397 0h1m-399 1h1m397 0h1m-398 1h1m395 0h1m-397 1h1m395 0h1m-396 1h1m393 0h1m-395 1h1m393 0h1m-394 1h1m391 0h1m-393 1h1m391 0h1m-392 1h1m389 0h1m-391 1h1m389 0h1m-390 1h1m387 0h1m-388 1h1m385 0h1m-387 1h1m385 0h1m-386 1h1m383 0h1m-384 1h1m381 0h1m-383 1h1m381 0h1m-382 1h1m379 0h1m-380 1h1m377 0h1m-379 1h1m377 0h1m-378 1h1m375 0h1m-377 1h1m375 0h1m-376 1h1m373 0h1m-375 1h1m373 0h1m-374 1h1m371 0h1m-372 1h1m369 0h1m-370 1h1m367 0h1m-368 1h1m365 0h1m-367 1h1m365 0h1m-366 1h1m363 0h1m-364 1h1m361 0h1m-362 1h1m359 0h1m-361 1h1m359 0h1m-360 1h1m357 0h1m-358 1h1m355 0h1m-356 1h1m353 0h1m-355 1h1m353 0h1m-354 1h1m351 0h1m-352 1h1m349 0h1m-350 1h1m347 0h1m-348 1h1m345 0h1m-347 1h1m345 0h1m-346 1h1m343 0h1m-344 1h1m341 0h1m-342 1h1m339 0h1m-340 1h1m337 0h1m-338 1h1m335 0h1m-337 1h1m335 0h1m-336 1h1m333 0h1m-334 1h1m331 0h1m-332 1h1m329 0h1m-330 1h1m327 0h1m-328 1h1m325 0h1m-326 1h1m323 0h1m-324 1h1m321 0h1m-322 1h1m319 0h1m-320 1h1m317 0h1m-318 1h1m315 0h1m-316 1h1m313 0h1m-314 1h1m311 0h1m-312 1h1m309 0h1m-310 1h1m307 0h1m-308 1h1m305 0h1m-306 1h1m303 0h1m-304 1h1m301 0h1m-302 1h1m299 0h1m-300 1h1m297 0h1m-298 1h1m294 0h2m-296 1h2m291 0h1m-292 1h1m289 0h1m-290 1h1m287 0h1m-288 1h1m285 0h1m-286 1h1m282 0h2m-284 1h2m279 0h1m-280 1h1m277 0h1m-278 1h1m275 0h1m-276 1h2m271 0h2m-273 1h1m269 0h1m-270 1h1m267 0h1m-268 1h2m263 0h2m-265 1h1m261 0h1m-262 1h1m259 0h1m-260 1h1m256 0h2m-258 1h2m253 0h1m-254 1h1m251 0h1m-252 1h1m249 0h1m-250 1h2m245 0h2m-247 1h2m241 0h2m-243 1h2m237 0h2m-239 1h1m235 0h1m-236 1h2m231 0h2m-233 1h1m229 0h1m-230 1h2m225 0h2m-227 1h1m223 0h1m-224 1h2m219 0h2m-221 1h2m215 0h2m-217 1h2m211 0h2m-213 1h2m207 0h2m-209 1h2m203 0h2m-205 1h2m199 0h2m-201 1h2m195 0h2m-197 1h2m191 0h2m-193 1h2m187 0h2m-189 1h2m183 0h2m-185 1h2m179 0h2m-181 1h2m175 0h2m-177 1h2m171 0h2m-173 1h3m164 0h4m-168 1h4m156 0h4m-160 1h4m149 0h3m-152 1h2m145 0h2m-147 1h2m141 0h2m-143 1h3m134 0h4m-138 1h4m126 0h4m-130 1h4m119 0h3m-122 1h4m111 0h4m-115 1h3m104 0h4m-108 1h4m96 0h4m-100 1h4m88 0h4m-92 1h4m80 0h4m-84 1h6m69 0h5m-74 1h7m54 0h8m-62 1h16m22 0h16m-38 1h22"/>
<path stroke="#fff" d="M283 105.5h33m-40 1h7m33 0h7m-54 1h7m47 0h6m-66 1h6m60 0h7m-78 1h5m73 0h5m-87 1h4m83 0h4m-94 1h3m91 0h3m-100 1h3m97 0h3m-106 1h3m103 0h3m-113 1h4m109 0h4m-120 1h3m117 0h3m-126 1h3m123 0h3m-132 1h3m129 0h3m-138 1h3m135 0h3m-144 1h3m141 0h3m-149 1h2m147 0h2m-153 1h2m151 0h2m-158 1h3m155 0h2m-162 1h2m160 0h2m-166 1h2m164 0h2m-170 1h2m168 0h2m-174 1h2m172 0h2m-178 1h2m176 0h2m-182 1h2m180 0h2m-186 1h2m184 0h2m-190 1h2m188 0h2m-193 1h1m192 0h2m-197 1h2m195 0h2m-200 1h1m199 0h1m-203 1h2m201 0h2m-206 1h1m205 0h1m-209 1h2m207 0h2m-213 1h2m211 0h2m-216 1h1m215 0h1m-219 1h2m217 0h2m-222 1h1m221 0h1m-225 1h2m223 0h2m-228 1h1m227 0h1m-230 1h1m229 0h1m-233 1h2m231 0h2m-236 1h1m235 0h1m-238 1h1m237 0h1m-240 1h1m239 0h1m-243 1h2m241 0h1m-245 1h1m244 0h2m-248 1h1m247 0h1m-250 1h1m249 0h1m-252 1h1m251 0h1m-255 1h2m253 0h2m-258 1h1m257 0h1m-260 1h1m259 0h1m-262 1h1m261 0h1m-264 1h1m263 0h1m-266 1h1m265 0h1m-268 1h1m267 0h1m-270 1h1m269 0h1m-272 1h1m271 0h1m-274 1h1m273 0h1m-276 1h1m275 0h1m-278 1h1m277 0h1m-280 1h1m279 0h1m-282 1h1m281 0h1m-284 1h1m283 0h1m-286 1h1m285 0h1m-288 1h1m287 0h1m-290 1h1m289 0h1m-292 1h1m291 0h1m-293 1h1m291 0h1m-294 1h1m293 0h1m-296 1h1m295 0h1m-298 1h1m297 0h1m-300 1h1m299 0h1m-302 1h1m301 0h1m-303 1h1m301 0h1m-304 1h1m303 0h1m-306 1h1m305 0h1m-308 1h1m307 0h1m-310 1h1m309 0h1m-311 1h1m309 0h1m-312 1h1m311 0h1m-314 1h1m313 0h1m-316 1h1m315 0h1m-317 1h1m315 0h1m-318 1h1m317 0h1m-320 1h1m319 0h1m-321 1h1m319 0h1m-322 1h1m321 0h1m-324 1h1m323 0h1m-325 1h1m323 0h1m-326 1h1m325 0h1m-327 1h1m325 0h1m-328 1h1m327 0h1m-330 1h1m329 0h1m-331 1h1m329 0h1m-332 1h1m331 0h1m-334 1h1m333 0h1m-335 1h1m333 0h1m-336 1h1m335 0h1m-338 1h1m337 0h1m-339 1h1m337 0h1m-340 1h1m339 0h1m-341 1h1m339 0h1m-342 1h1m341 0h1m-343 1h1m341 0h1m-344 1h1m343 0h1m-345 1h1m343 0h1m-346 1h1m345 0h1m-347 1h1m345 0h1m-348 1h1m347 0h1m-349 1h1m347 0h1m-350 1h1m349 0h1m-351 1h1m349 0h1m-352 1h1m351 0h1m-353 1h1m351 0h1m-354 1h1m353 0h1m-355 1h1m353 0h1m-355 1h1m353 0h1m-356 1h1m355 0h1m-357 1h1m355 0h1m-358 1h1m357 0h1m-359 1h1m357 0h1m-360 1h1m359 0h1m-361 1h1m359 0h1m-361 1h1m359 0h1m-362 1h1m361 0h1m-363 1h1m361 0h1m-363 1h1m361 0h1m-364 1h1m363 0h1m-365 1h1m363 0h1m-365 1h1m363 0h1m-366 1h1m365 0h1m-367 1h1m365 0h1m-367 1h1m365 0h1m-368 1h1m367 0h1m-369 1h1m367 0h1m-369 1h1m367 0h1m-370 1h1m369 0h1m-371 1h1m369 0h1m-371 1h1m369 0h1m-371 1h1m369 0h1m-372 1h1m371 0h1m-373 1h1m371 0h1m-373 1h1m371 0h1m-374 1h1m373 0h1m-375 1h1m373 0h1m-375 1h1m373 0h1m-376 1h1m375 0h1m-377 1h1m375 0h1m-377 1h1m375 0h1m-378 1h1m377 0h1m-379 1h1m377 0h1m-379 1h1m377 0h1m-379 1h1m377 0h1m-380 1h1m379 0h1m-381 1h1m379 0h1m-381 1h1m379 0h1m-381 1h1m379 0h1m-381 1h1m379 0h1m-382 1h1m381 0h1m-383 1h1m381 0h1m-383 1h1m381 0h1m-383 1h1m381 0h1m-383 1h1m381 0h1m-383 1h1m381 0h1m-384 1h1m383 0h1m-385 1h1m383 0h1m-385 1h1m383 0h1m-385 1h1m383 0h1m-385 1h1m383 0h1m-385 1h1m383 0h1m-385 1h1m383 0h1m-386 1h1m385 0h1m-387 1h1m385 0h1m-387 1h1m385 0h1m-387 1h1m385 0h1m-387 1h1m385 0h1m-387 1h1m385 0h1m-387 1h1m385 0h1m-388 1h1m387 0h1m-389 1h1m387 0h1m-389 1h1m387 0h1m-389 1h1m387 0h1m-389 1h1m387 0h1m-389 1h1m387 0h1m-389 1h1m387 0h1m-389 1h1m387 0h1m-389 1h1m387 0h1m-389 1h1m387 0h1m-389 1h1m387 0h1m-389 1h1m387 0h1m-389 1h1m387 0h1m-389 1h1m387 0h1m-389 1h1m387 0h1m-389 1h1m387 0h1m-389 1h1m387 0h1m-389 1h1m387 0h1m-389 1h1m387 0h1m-389 1h1m387 0h1m-389 1h1m387 0h1m-389 1h1m387 0h1m-389 1h1m387 0h1m-389 1h1m387 0h1m-389 1h1m387 0h1m-389 1h1m387 0h1m-389 1h1m387 0h1m-389 1h1m387 0h1m-389 1h1m387 0h1m-389 1h1m387 0h1m-389 1h1m387 0h1m-389 1h1m387 0h1m-389 1h1m387 0h1m-388 1h1m385 0h1m-387 1h1m385 0h1m-387 1h1m385 0h1m-387 1h1m385 0h1m-387 1h1m385 0h1m-387 1h1m385 0h1m-387 1h1m385 0h1m-386 1h1m383 0h1m-385 1h1m383 0h1m-385 1h1m383 0h1m-385 1h1m383 0h1m-385 1h1m383 0h1m-385 1h1m383 0h1m-384 1h1m381 0h1m-383 1h1m381 0h1m-383 1h1m381 0h1m-383 1h1m381 0h1m-383 1h1m381 0h1m-383 1h1m381 0h1m-383 1h1m381 0h1m-382 1h1m379 0h1m-381 1h1m379 0h1m-381 1h1m379 0h1m-381 1h1m379 0h1m-381 1h1m379 0h1m-380 1h1m377 0h1m-379 1h1m377 0h1m-379 1h1m377 0h1m-379 1h1m377 0h1m-378 1h1m375 0h1m-377 1h1m375 0h1m-377 1h1m375 0h1m-376 1h1m373 0h1m-375 1h1m373 0h1m-375 1h1m373 0h1m-374 1h1m371 0h1m-373 1h1m371 0h1m-373 1h1m371 0h1m-372 1h1m369 0h1m-371 1h1m369 0h1m-371 1h1m369 0h1m-371 1h1m369 0h1m-370 1h1m367 0h1m-369 1h1m367 0h1m-369 1h1m367 0h1m-368 1h1m365 0h1m-367 1h1m365 0h1m-367 1h1m365 0h1m-366 1h1m363 0h1m-365 1h1m363 0h1m-365 1h1m363 0h1m-364 1h1m361 0h1m-363 1h1m361 0h1m-363 1h1m361 0h1m-362 1h1m359 0h1m-361 1h1m359 0h1m-361 1h1m359 0h1m-360 1h1m357 0h1m-359 1h1m357 0h1m-358 1h1m355 0h1m-357 1h1m355 0h1m-356 1h1m353 0h1m-355 1h1m353 0h1m-354 1h1m351 0h1m-353 1h1m351 0h1m-352 1h1m349 0h1m-351 1h1m349 0h1m-350 1h1m347 0h1m-349 1h1m347 0h1m-348 1h1m345 0h1m-347 1h1m345 0h1m-346 1h1m343 0h1m-345 1h1m343 0h1m-344 1h1m341 0h1m-343 1h1m341 0h1m-342 1h1m339 0h1m-341 1h1m339 0h1m-340 1h1m337 0h1m-339 1h1m337 0h1m-338 1h1m335 0h1m-337 1h1m335 0h1m-336 1h1m333 0h1m-335 1h1m333 0h1m-334 1h1m331 0h1m-332 1h1m329 0h1m-331 1h1m329 0h1m-330 1h1m327 0h1m-328 1h1m325 0h1m-327 1h1m325 0h1m-326 1h1m323 0h1m-325 1h1m323 0h1m-324 1h1m321 0h1m-322 1h1m319 0h1m-321 1h1m319 0h1m-320 1h1m317 0h1m-318 1h1m315 0h1m-317 1h1m315 0h1m-316 1h1m313 0h1m-314 1h1m311 0h1m-312 1h1m309 0h1m-311 1h1m309 0h1m-310 1h1m307 0h1m-308 1h1m305 0h1m-306 1h1m303 0h1m-304 1h1m301 0h1m-302 1h1m299 0h1m-301 1h1m299 0h1m-300 1h1m297 0h1m-298 1h1m295 0h1m-296 1h1m293 0h1m-294 1h1m291 0h1m-293 1h1m291 0h1m-292 1h1m289 0h1m-290 1h1m287 0h1m-288 1h1m285 0h1m-286 1h1m283 0h1m-284 1h1m281 0h1m-282 1h1m279 0h1m-280 1h1m277 0h1m-278 1h1m275 0h1m-276 1h1m273 0h1m-274 1h1m271 0h1m-272 1h1m269 0h1m-270 1h1m267 0h1m-268 1h1m265 0h1m-266 1h1m263 0h1m-264 1h1m261 0h1m-262 1h1m259 0h1m-260 1h1m257 0h1m-258 1h2m253 0h2m-255 1h1m251 0h1m-252 1h1m249 0h1m-250 1h1m247 0h1m-248 1h1m244 0h2m-246 1h2m241 0h1m-242 1h1m239 0h1m-240 1h1m237 0h1m-238 1h1m235 0h1m-236 1h2m231 0h2m-233 1h1m229 0h1m-230 1h1m227 0h1m-228 1h2m223 0h2m-225 1h1m221 0h1m-222 1h2m217 0h2m-219 1h1m215 0h1m-216 1h2m211 0h2m-213 1h2m207 0h2m-209 1h1m205 0h1m-206 1h2m201 0h2m-203 1h1m199 0h1m-200 1h2m195 0h2m-197 1h1m192 0h2m-194 1h2m188 0h2m-190 1h2m184 0h2m-186 1h2m180 0h2m-182 1h2m176 0h2m-178 1h2m172 0h2m-174 1h2m168 0h2m-170 1h2m164 0h2m-166 1h2m160 0h2m-162 1h3m155 0h2m-157 1h2m151 0h2m-153 1h2m147 0h2m-149 1h3m141 0h3m-144 1h3m135 0h3m-138 1h3m129 0h3m-132 1h3m123 0h3m-126 1h3m117 0h3m-120 1h4m109 0h4m-113 1h3m103 0h3m-106 1h3m97 0h3m-100 1h3m91 0h3m-94 1h4m83 0h4m-87 1h5m73 0h5m-78 1h6m60 0h7m-67 1h7m47 0h6m-53 1h7m33 0h7m-40 1h33"/>
</g>
<g id="cusps">
<path stroke="#fff" d="M15 299.5h45m15 0h30"/>
<path stroke="#fff" d="M130 396.5h1m-3 1h2m-4 1h2m-3 1h1m-3 1h2m-4 1h2m-3 1h1m-3 1h2m-4 1h2m-3 1h1m-3 1h2m-4 1h2m-3 1h1m-3 1h2m-4 1h2m-3 1h1m-15 8h1m-3 1h2m-4 1h2m-4 1h2m-3 1h1m-3 1h2m-4 1h2m-3 1h1m-3 1h2m-4 1h2m-4 1h2m-3 1h1m-3 1h2m-4 1h2m-4 1h2m-3 1h1m-3 1h2m-4 1h2m-3 1h1m-3 1h2m-4 1h2m-4 1h2m-3 1h1"/>
<path stroke="#7f7f7f" d="M299 299.5h1m-3 1h1m-3 1h1m-3 1h1m-3 2h1m-3 1h1m-3 1h1m-3 1h1m-3 1h1m-3 1h1m-3 2h1m-3 1h1m-3 1h1m-3 1h1m-3 1h1m-3 1h1m-3 1h1m-3 2h1m-3 1h1m-3 1h1m-3 1h1m-3 1h1m-3 1h1m-3 2h1m-3 1h1m-3 1h1m-3 1h1m-3 1h1m-3 1h1m-3 1h1m-3 2h1m-3 1h1m-3 1h1m-3 1h1m-3 1h1m-3 1h1m-3 2h1m-3 1h1m-3 1h1m-3 1h1m-3 1h1m-3 1h1m-3 1h1m-3 2h1m-3 1h1m-3 1h1m-3 1h1m-3 1h1m-3 1h1m-3 2h1m-3 1h1m-3 1h1m-3 1h1m-3 1h1m-3 1h1m-3 2h1m-3 1h1m-3 1h1m-3 1h1m-3 1h1m-3 1h1m-3 1h1m-3 2h1m-3 1h1m-3 1h1m-3 1h1m-3 1h1m-3 1h1m-3 2h1m-3 1h1m-3 1h1m-3 1h1m-3 1h1m-3 1h1m-3 1h1m-3 2h1m-3 1h1m-3 1h1m-3 1h1m-3 1h1m-3 1h1m-3 2h1m-3 1h1m-3 1h1m-3 1h1"/>
<path stroke="#fff" d="M157.5 545v1m1 -3v2m1 -4v2m1 -4v2m1 -3v1m1 -3v2m1 -4v2m1 -3v1m1 -3v2m1 -4v2m1 -4v2m1 -3v1m1 -3v2m1 -4v2m1 -4v2m1 -3v1m1 -3v2m1 -4v2m1 -3v1m1 -3v2m1 -4v2m1 -4v2m1 -3v1m8 -15v1m1 -3v2m1 -4v2m1 -3v1m1 -3v2m1 -4v2m1 -3v1m1 -3v2m1 -4v2m1 -3v1m1 -3v2m1 -4v2m1 -3v1m1 -3v2m1 -4v2m1 -3v1"/>
<path stroke="#7f7f7f" d="M299 299.5h1m-2 2h1m-2 2h1m-2 2h1m-3 2h1m-2 2h1m-2 2h1m-2 2h1m-2 2h1m-2 2h1m-3 2h1m-2 2h1m-2 2h1m-2 2h1m-2 2h1m-2 2h1m-2 2h1m-3 2h1m-2 2h1m-2 2h1m-2 2h1m-2 2h1m-2 2h1m-3 2h1m-2 2h1m-2 2h1m-2 2h1m-2 2h1m-2 2h1m-2 2h1m-3 2h1m-2 2h1m-2 2h1m-2 2h1m-2 2h1m-2 2h1m-3 2h1m-2 2h1m-2 2h1m-2 2h1m-2 2h1m-2 2h1m-3 2h1m-2 2h1m-2 2h1m-2 2h1m-2 2h1m-2 2h1m-2 2h1m-3 2h1m-2 2h1m-2 2h1m-2 2h1m-2 2h1m-2 2h1m-3 2h1m-2 2h1m-2 2h1m-2 2h1m-2 2h1m-2 2h1m-2 2h1m-3 2h1m-2 2h1m-2 2h1m-2 2h1m-2 2h1m-2 2h1m-3 2h1m-2 2h1m-2 2h1m-2 2h1m-2 2h1m-2 2h1m-2 2h1m-3 2h1m-2 2h1m-2 2h1m-2 2h1m-2 2h1m-2 2h1m-3 2h1m-2 2h1m-2 2h1m-2 2h1"/>
<path stroke="#fff" d="M299.5 494v30m0 15v45"/>
<path stroke="#fff" d="M396.5 468v1m1 0v2m1 0v2m1 0v1m1 0v2m1 0v2m1 0v1m1 0v2m1 0v2m1 0v1m1 0v2m1 0v2m1 0v1m1 0v2m1 0v2m1 0v1m8 13v1m1 0v2m1 0v2m1 0v2m1 0v1m1 0v2m1 0v2m1 0v1m1 0v2m1 0v2m1 0v2m1 0v1m1 0v2m1 0v2m1 0v2m1 0v1m1 0v2m1 0v2m1 0v1m1 0v2m1 0v2m1 0v2m1 0v1"/>
<path stroke="#7f7f7f" d="M299 299.5h1m0 2h1m0 2h1m0 2h1m1 2h1m0 2h1m0 2h1m0 2h1m0 2h1m0 2h1m1 2h1m0 2h1m0 2h1m0 2h1m0 2h1m0 2h1m0 2h1m1 2h1m0 2h1m0 2h1m0 2h1m0 2h1m0 2h1m1 2h1m0 2h1m0 2h1m0 2h1m0 2h1m0 2h1m0 2h1m1 2h1m0 2h1m0 2h1m0 2h1m0 2h1m0 2h1m1 2h1m0 2h1m0 2h1m0 2h1m0 2h1m0 2h1m1 2h1m0 2h1m0 2h1m0 2h1m0 2h1m0 2h1m0 2h1m1 2h1m0 2h1m0 2h1m0 2h1m0 2h1m0 2h1m1 2h1m0 2h1m0 2h1m0 2h1m0 2h1m0 2h1m0 2h1m1 2h1m0 2h1m0 2h1m0 2h1m0 2h1m0 2h1m1 2h1m0 2h1m0 2h1m0 2h1m0 2h1m0 2h1m0 2h1m1 2h1m0 2h1m0 2h1m0 2h1m0 2h1m0 2h1m1 2h1m0 2h1m0 2h1m0 2h1"/>
<path stroke="#fff" d="M468 396.5h1m0 1h2m0 1h2m0 1h1m0 1h2m0 1h2m0 1h1m0 1h2m0 1h2m0 1h1m0 1h2m0 1h2m0 1h1m0 1h2m0 1h2m0 1h1m13 8h1m0 1h2m0 1h2m0 1h2m0 1h1m0 1h2m0 1h2m0 1h1m0 1h2m0 1h2m0 1h2m0 1h1m0 1h2m0 1h2m0 1h2m0 1h1m0 1h2m0 1h2m0 1h1m0 1h2m0 1h2m0 1h2m0 1h1"/>
<path stroke="#7f7f7f" d="M299 299.5h1m1 1h1m1 1h1m1 1h1m1 2h1m1 1h1m1 1h1m1 1h1m1 1h1m1 1h1m1 2h1m1 1h1m1 1h1m1 1h1m1 1h1m1 1h1m1 1h1m1 2h1m1 1h1m1 1h1m1 1h1m1 1h1m1 1h1m1 2h1m1 1h1m1 1h1m1 1h1m1 1h1m1 1h1m1 1h1m1 2h1m1 1h1m1 1h1m1 1h1m1 1h1m1 1h1m1 2h1m1 1h1m1 1h1m1 1h1m1 1h1m1 1h1m1 2h1m1 1h1m1 1h1m1 1h1m1 1h1m1 1h1m1 1h1m1 2h1m1 1h1m1 1h1m1 1h1m1 1h1m1 1h1m1 2h1m1 1h1m1 1h1m1 1h1m1 1h1m1 1h1m1 1h1m1 2h1m1 1h1m1 1h1m1 1h1m1 1h1m1 1h1m1 2h1m1 1h1m1 1h1m1 1h1m1 1h1m1 1h1m1 1h1m1 2h1m1 1h1m1 1h1m1 1h1m1 1h1m1 1h1m1 2h1m1 1h1m1 1h1m1 1h1"/>
<path stroke="#fff" d="M494 299.5h30m15 0h45"/>
<path stroke="#fff" d="M545 157.5h1m-3 1h2m-4 1h2m-4 1h2m-3 1h1m-3 1h2m-4 1h2m-3 1h1m-3 1h2m-4 1h2m-4 1h2m-3 1h1m-3 1h2m-4 1h2m-4 1h2m-3 1h1m-3 1h2m-4 1h2m-3 1h1m-3 1h2m-4 1h2m-4 1h2m-3 1h1m-15 8h1m-3 1h2m-4 1h2m-3 1h1m-3 1h2m-4 1h2m-3 1h1m-3 1h2m-4 1h2m-3 1h1m-3 1h2m-4 1h2m-3 1h1m-3 1h2m-4 1h2m-3 1h1"/>
<path stroke="#7f7f7f" d="M467 202.5h1m-3 1h1m-3 1h1m-3 1h1m-3 2h1m-3 1h1m-3 1h1m-3 1h1m-3 1h1m-3 1h1m-3 2h1m-3 1h1m-3 1h1m-3 1h1m-3 1h1m-3 1h1m-3 1h1m-3 2h1m-3 1h1m-3 1h1m-3 1h1m-3 1h1m-3 1h1m-3 2h1m-3 1h1m-3 1h1m-3 1h1m-3 1h1m-3 1h1m-3 1h1m-3 2h1m-3 1h1m-3 1h1m-3 1h1m-3 1h1m-3 1h1m-3 2h1m-3 1h1m-3 1h1m-3 1h1m-3 1h1m-3 1h1m-3 1h1m-3 2h1m-3 1h1m-3 1h1m-3 1h1m-3 1h1m-3 1h1m-3 2h1m-3 1h1m-3 1h1m-3 1h1m-3 1h1m-3 1h1m-3 2h1m-3 1h1m-3 1h1m-3 1h1m-3 1h1m-3 1h1m-3 1h1m-3 2h1m-3 1h1m-3 1h1m-3 1h1m-3 1h1m-3 1h1m-3 2h1m-3 1h1m-3 1h1m-3 1h1m-3 1h1m-3 1h1m-3 1h1m-3 2h1m-3 1h1m-3 1h1m-3 1h1m-3 1h1m-3 1h1m-3 2h1m-3 1h1m-3 1h1m-3 1h1"/>
<path stroke="#fff" d="M396.5 130v1m1 -3v2m1 -4v2m1 -3v1m1 -3v2m1 -4v2m1 -3v1m1 -3v2m1 -4v2m1 -3v1m1 -3v2m1 -4v2m1 -3v1m1 -3v2m1 -4v2m1 -3v1m8 -15v1m1 -3v2m1 -4v2m1 -4v2m1 -3v1m1 -3v2m1 -4v2m1 -3v1m1 -3v2m1 -4v2m1 -4v2m1 -3v1m1 -3v2m1 -4v2m1 -4v2m1 -3v1m1 -3v2m1 -4v2m1 -3v1m1 -3v2m1 -4v2m1 -4v2m1 -3v1"/>
<path stroke="#7f7f7f" d="M396 131.5h1m-2 2h1m-2 2h1m-2 2h1m-3 2h1m-2 2h1m-2 2h1m-2 2h1m-2 2h1m-2 2h1m-3 2h1m-2 2h1m-2 2h1m-2 2h1m-2 2h1m-2 2h1m-2 2h1m-3 2h1m-2 2h1m-2 2h1m-2 2h1m-2 2h1m-2 2h1m-3 2h1m-2 2h1m-2 2h1m-2 2h1m-2 2h1m-2 2h1m-2 2h1m-3 2h1m-2 2h1m-2 2h1m-2 2h1m-2 2h1m-2 2h1m-3 2h1m-2 2h1m-2 2h1m-2 2h1m-2 2h1m-2 2h1m-3 2h1m-2 2h1m-2 2h1m-2 2h1m-2 2h1m-2 2h1m-2 2h1m-3 2h1m-2 2h1m-2 2h1m-2 2h1m-2 2h1m-2 2h1m-3 2h1m-2 2h1m-2 2h1m-2 2h1m-2 2h1m-2 2h1m-2 2h1m-3 2h1m-2 2h1m-2 2h1m-2 2h1m-2 2h1m-2 2h1m-3 2h1m-2 2h1m-2 2h1m-2 2h1m-2 2h1m-2 2h1m-2 2h1m-3 2h1m-2 2h1m-2 2h1m-2 2h1m-2 2h1m-2 2h1m-3 2h1m-2 2h1m-2 2h1m-2 2h1"/>
<path stroke="#fff" d="M299.5 15v45m0 15v30"/>
<path stroke="#fff" d="M157.5 53v1m1 0v2m1 0v2m1 0v2m1 0v1m1 0v2m1 0v2m1 0v1m1 0v2m1 0v2m1 0v2m1 0v1m1 0v2m1 0v2m1 0v2m1 0v1m1 0v2m1 0v2m1 0v1m1 0v2m1 0v2m1 0v2m1 0v1m8 13v1m1 0v2m1 0v2m1 0v1m1 0v2m1 0v2m1 0v1m1 0v2m1 0v2m1 0v1m1 0v2m1 0v2m1 0v1m1 0v2m1 0v2m1 0v1"/>
<path stroke="#7f7f7f" d="M202 131.5h1m0 2h1m0 2h1m0 2h1m1 2h1m0 2h1m0 2h1m0 2h1m0 2h1m0 2h1m1 2h1m0 2h1m0 2h1m0 2h1m0 2h1m0 2h1m0 2h1m1 2h1m0 2h1m0 2h1m0 2h1m0 2h1m0 2h1m1 2h1m0 2h1m0 2h1m0 2h1m0 2h1m0 2h1m0 2h1m1 2h1m0 2h1m0 2h1m0 2h1m0 2h1m0 2h1m1 2h1m0 2h1m0 2h1m0 2h1m0 2h1m0 2h1m1 2h1m0 2h1m0 2h1m0 2h1m0 2h1m0 2h1m0 2h1m1 2h1m0 2h1m0 2h1m0 2h1m0 2h1m0 2h1m1 2h1m0 2h1m0 2h1m0 2h1m0 2h1m0 2h1m0 2h1m1 2h1m0 2h1m0 2h1m0 2h1m0 2h1m0 2h1m1 2h1m0 2h1m0 2h1m0 2h1m0 2h1m0 2h1m0 2h1m1 2h1m0 2h1m0 2h1m0 2h1m0 2h1m0 2h1m1 2h1m0 2h1m0 2h1m0 2h1"/>
<path stroke="#fff" d="M53 157.5h1m0 1h2m0 1h2m0 1h2m0 1h1m0 1h2m0 1h2m0 1h1m0 1h2m0 1h2m0 1h2m0 1h1m0 1h2m0 1h2m0 1h2m0 1h1m0 1h2m0 1h2m0 1h1m0 1h2m0 1h2m0 1h2m0 1h1m13 8h1m0 1h2m0 1h2m0 1h1m0 1h2m0 1h2m0 1h1m0 1h2m0 1h2m0 1h1m0 1h2m0 1h2m0 1h1m0 1h2m0 1h2m0 1h1"/>
<path stroke="#7f7f7f" d="M131 202.5h1m1 1h1m1 1h1m1 1h1m1 2h1m1 1h1m1 1h1m1 1h1m1 1h1m1 1h1m1 2h1m1 1h1m1 1h1m1 1h1m1 1h1m1 1h1m1 1h1m1 2h1m1 1h1m1 1h1m1 1h1m1 1h1m1 1h1m1 2h1m1 1h1m1 1h1m1 1h1m1 1h1m1 1h1m1 1h1m1 2h1m1 1h1m1 1h1m1 1h1m1 1h1m1 1h1m1 2h1m1 1h1m1 1h1m1 1h1m1 1h1m1 1h1m1 2h1m1 1h1m1 1h1m1 1h1m1 1h1m1 1h1m1 1h1m1 2h1m1 1h1m1 1h1m1 1h1m1 1h1m1 1h1m1 2h1m1 1h1m1 1h1m1 1h1m1 1h1m1 1h1m1 1h1m1 2h1m1 1h1m1 1h1m1 1h1m1 1h1m1 1h1m1 2h1m1 1h1m1 1h1m1 1h1m1 1h1m1 1h1m1 1h1m1 2h1m1 1h1m1 1h1m1 1h1m1 1h1m1 1h1m1 2h1m1 1h1m1 1h1m1 1h1"/>
</g>
<g id="signs">
<path stroke="#0f0" d="M44 363.5h5m-6 1h1m5 0h1m-8 1h1m7 0h1m-9 1h1m7 0h1m-9 1h1m7 0h1m-8 1h1m5 0h1m-12 1h7m3 0h7m-17 4h17"/>
<path stroke="#00f" d="M106.5 476v1m1 0v1m1 0v13m1 -14v1m1 -2v1m1 0v1m1 0v13m1 -14v1m1 -2v1m1 0v1m1 0v13m1 0v1m1 0v1m1 -1v1m1 -5v1m0 2v1m1 -5v4m1 -3v1"/>
<path stroke="#f00" d="M235 544.5h5m-2 1h2m-3 1h1m1 0h1m-4 1h1m2 0h1m-5 1h1m3 0h1m-6 1h1m-10 1h1m7 0h1m-8 1h1m5 0h1m-6 1h1m3 0h1m-4 1h1m1 0h1m-2 1h1m-2 1h1m1 0h1m-4 1h1m3 0h1m-6 1h1m5 0h1m-8 1h1m7 0h1m-10 1h1m-2 1h1"/>
<path stroke="#ff0" d="M359.5 546v1m1 -2v1m1 -2v9m1 0v1m1 0v5m1 -6v1m1 -6v5m1 -6v1m1 -4v3m1 -2v1m0 1v1m1 -2v1m0 1v1m1 -4v1m0 3v1m1 -6v1m0 5v1m1 -7v1m0 5v2m1 -8v1m0 5v1m0 1v1m0 7v1m1 -16v1m0 3v1m0 3v1m0 5v1m1 -14v3m0 5v5"/>
<path stroke="#0f0" d="M476.5 482v1m0 9v1m1 -13v2m0 8v2m1 -13v1m0 9v1m1 -13v2m0 8v2m1 -13v2m0 8v2m1 -10v3m0 7v3m1 -10v2m0 8v2m1 -13v2m0 8v2m1 -13v1m0 9v1m1 -13v2m0 8v2m1 -13v2m0 8v2m1 -10v3m0 7v3m1 -10v2m0 8v2m1 -13v2m0 8v2m1 -13v1m0 9v1m1 -13v2m0 8v2m1 -13v1m0 9v1"/>
<path stroke="#00f" d="M544 359.5h1m15 0h1m-16 1h1m13 0h1m-14 1h1m11 0h1m-12 1h1m9 0h1m-11 1h1m9 0h1m-10 1h1m7 0h1m-9 1h1m7 0h1m-9 1h1m7 0h1m-13 1h17m-13 1h1m7 0h1m-9 1h1m7 0h1m-9 1h1m7 0h1m-10 1h1m9 0h1m-11 1h1m9 0h1m-12 1h1m11 0h1m-14 1h1m13 0h1m-16 1h1m15 0h1"/>
<path stroke="#f00" d="M544.5 225v3m1 -4v1m0 3v1m1 -6v1m0 5v1m1 -7v1m1 -1v1m1 0v1m1 0v3m1 0v4m1 0v8m1 -12v4m1 -7v3m1 -4v1m1 -2v1m1 -1v1m1 -1v1m0 5v1m1 -6v1m0 3v1m1 -4v3"/>
<path stroke="#ff0" d="M478 106.5h1m11 0h1m-12 1h1m9 0h1m-11 1h1m9 0h1m-10 1h2m5 0h2m-7 1h5m-7 1h2m5 0h2m-10 1h1m9 0h1m-11 1h1m9 0h1m-12 1h1m11 0h1m-13 1h1m11 0h1m-13 1h1m11 0h1m-13 1h1m11 0h1m-13 1h1m11 0h1m-12 1h1m9 0h1m-11 1h1m9 0h1m-10 1h2m5 0h2m-7 1h5"/>
<path stroke="#0f0" d="M361.5 38v1m0 15v1m1 -16v1m0 13v1m1 -14v1m0 11v1m1 -13v1m0 11v1m1 -13v13m1 -13v1m0 11v1m1 -13v1m0 11v1m1 -13v1m0 11v1m1 -13v1m0 11v1m1 -13v1m0 11v1m1 -13v13m1 -13v1m0 11v1m1 -13v1m0 11v1m1 -14v1m0 13v1m1 -16v1m0 15v1"/>
<path stroke="#00f" d="M229 39.5h5m-8 1h3m5 0h1m-10 1h1m9 0h3m-14 1h1m9 0h1m3 0h1m-16 1h1m9 0h1m5 0h1m-7 1h1m5 0h1m-15 1h3m5 0h1m5 0h1m-16 1h1m3 0h1m5 0h1m3 0h1m-16 1h1m5 0h1m5 0h3m-15 1h1m5 0h1m-7 1h1m5 0h1m9 0h1m-16 1h1m3 0h1m9 0h1m-14 1h3m9 0h1m-10 1h1m5 0h3m-8 1h5"/>
<path stroke="#f00" d="M106.5 118v1m1 0v1m1 -10v5m0 5v1m1 -12v1m0 5v1m0 3v1m1 -12v1m0 7v3m1 -12v1m1 -2v1m1 -1v1m1 -1v1m1 -1v1m1 -1v1m1 0v1m1 0v1m0 7v3m1 -10v1m0 5v1m0 3v1m1 -10v5m0 5v1m1 0v1m1 0v1"/>
<path stroke="#ff0" d="M38.5 223v1m1 0v1m1 0v13m1 -14v1m1 -2v1m1 0v1m1 0v13m1 -14v1m1 -2v1m1 0v1m1 0v11m0 3v1m1 -12v1m0 7v1m0 1v1m1 -12v1m0 9v1m1 -12v1m0 9v1m0 1v1m1 -14v11m0 3v1"/>
</g>
<g id="houses">
<g text-anchor="middle">
<text transform="translate(96.5 358) scale(0.8 1)" fill="#f00" font-size="13" font-family="'Liberation Sans',sans-serif">1</text>
<text transform="translate(151.5 452) scale(0.8 1)" fill="#ff0" font-size="13" font-family="'Liberation Sans',sans-serif">2</text>
<text transform="translate(245.5 507) scale(0.8 1)" fill="#0f0" font-size="13" font-family="'Liberation Sans',sans-serif">3</text>
<text transform="translate(353.5 507) scale(0.8 1)" fill="#00f" font-size="13" font-family="'Liberation Sans',sans-serif">4</text>
<text transform="translate(447.5 452) scale(0.8 1)" fill="#f00" font-size="13" font-family="'Liberation Sans',sans-serif">5</text>
<text transform="translate(502.5 358) scale(0.8 1)" fill="#ff0" font-size="13" font-family="'Liberation Sans',sans-serif">6</text>
<text transform="translate(502.5 250) scale(0.8 1)" fill="#0f0" font-size="13" font-family="'Liberation Sans',sans-serif">7</text>
<text transform="translate(447.5 156) scale(0.8 1)" fill="#00f" font-size="13" font-family="'Liberation Sans',sans-serif">8</text>
<text transform="translate(353.5 101) scale(0.8 1)" fill="#f00" font-size="13" font-family="'Liberation Sans',sans-serif">9</text>
<text transform="translate(246.6 101) scale(0.8 1)" fill="#ff0" font-size="13" letter-spacing="2.75" font-family="'Liberation Sans',sans-serif">10</text>
<text transform="translate(152.6 156) scale(0.8 1)" fill="#0f0" font-size="13" letter-spacing="2.75" font-family="'Liberation Sans',sans-serif">11</text>
<text transform="translate(97.6 250) scale(0.8 1)" fill="#00f" font-size="13" letter-spacing="2.75" font-family="'Liberation Sans',sans-serif">12</text>
</g>
</g>
<g id="aspects">
<path stroke="#f00" d="M158.5 324v1m1 -3v2m1 -3v1m1 -3v2m1 -3v1m1 -3v2m1 -3v1m1 -2v1m1 -3v2m1 -3v1m1 -3v2m1 -3v1m1 -3v2m1 -3v1m1 -3v2m1 -3v1m1 -3v2m1 -3v1m1 -2v1m1 -3v2m1 -3v1m1 -3v2m1 -3v1m1 -3v2m1 -3v1m1 -3v2m1 -3v1m1 -3v2m1 -3v1m1 -2v1m1 -3v2m1 -3v1m1 -3v2m1 -3v1m1 -3v2m1 -3v1m1 -3v2m1 -3v1m1 -3v2m1 -3v1m1 -2v1m1 -3v2m1 -3v1m1 -3v2m1 -3v1m1 -3v2m1 -3v1m1 -3v2m1 -3v1m1 -3v2m1 -3v1m1 -2v1m1 -3v2m1 -3v1m1 -3v2m1 -3v1m1 -3v2m1 -3v1m1 -3v2m1 -3v1m1 -3v2m1 -3v1m1 -3v2m1 -3v1m1 -2v1m1 -3v2m1 -3v1m1 -3v2m1 -3v1m1 -3v2m1 -3v1m1 -3v2m1 -3v1m1 -3v2m1 -3v1m1 -2v1m1 -3v2m1 -3v1m1 -3v2m1 -3v1m1 -3v2m1 -3v1m1 -3v2m1 -3v1m1 -3v2m1 -3v1m1 -2v1m1 -3v2m1 -3v1m1 -3v2m1 -3v1m1 -3v2m1 -3v1m1 -3v2m1 -3v1m1 -3v2m1 -3v1m1 -2v1m1 -3v2m1 -3v1m1 -3v2m1 -3v1m1 -3v2m1 -3v1m1 -3v2m1 -3v1m1 -3v2m1 -3v1m1 -2v1m1 -3v2m1 -3v1m1 -3v2m1 -3v1m1 -3v2m1 -3v1"/>
<path stroke="#0f0" d="M272 158.5h1m-2 2h1m-1 2h1m-2 2h1m-1 2h1m-2 2h1m-2 2h1m-1 2h1m-2 2h1m-2 2h1m-1 2h1m-2 2h1m-1 2h1m-2 2h1m-2 2h1m-1 2h1m-2 2h1m-2 2h1m-1 2h1m-2 2h1m-1 2h1m-2 2h1m-2 2h1m-1 2h1m-2 2h1m-1 2h1m-2 2h1m-2 2h1m-1 2h1m-2 2h1m-2 2h1m-1 2h1m-2 2h1m-1 2h1m-2 2h1m-2 2h1m-1 2h1m-2 2h1m-2 2h1m-1 2h1m-2 2h1m-1 2h1m-2 2h1m-2 2h1m-1 2h1m-2 2h1m-2 2h1m-1 2h1m-2 2h1m-1 2h1m-2 2h1m-2 2h1m-1 2h1m-2 2h1m-1 2h1m-2 2h1m-2 2h1m-1 2h1m-2 2h1m-2 2h1m-1 2h1m-2 2h1m-1 2h1m-2 2h1m-2 2h1m-1 2h1m-2 2h1m-2 2h1m-1 2h1m-2 2h1m-1 2h1m-2 2h1m-2 2h1m-1 2h1m-2 2h1m-1 2h1m-2 2h1m-2 2h1m-1 2h1m-2 2h1m-2 2h1m-1 2h1m-2 2h1m-1 2h1m-2 2h1m-2 2h1m-1 2h1m-2 2h1m-2 2h1m-1 2h1m-2 2h1m-1 2h1m-2 2h1m-2 2h1m-1 2h1m-2 2h1m-2 2h1m-1 2h1m-2 2h1m-1 2h1m-2 2h1m-2 2h1m-1 2h1m-2 2h1m-1 2h1m-2 2h1m-2 2h1m-1 2h1m-2 2h1m-2 2h1m-1 2h1m-2 2h1m-1 2h1m-2 2h1m-2 2h1m-1 2h1m-2 2h1m-2 2h1m-1 2h1m-2 2h1m-1 2h1m-2 2h1"/>
<path stroke="#0ff" d="M165 352.5h1m0 1h1m0 1h2m0 1h1m0 1h1m0 1h1m0 1h2m0 1h1m0 1h1m0 1h1m0 1h1m0 1h2m0 1h1m0 1h1m0 1h1m0 1h2m0 1h1m0 1h1m0 1h1m0 1h2m0 1h1m0 1h1m0 1h1m0 1h2m0 1h1m0 1h1m0 1h1m0 1h1m0 1h2m0 1h1m0 1h1m0 1h1m0 1h2m0 1h1m0 1h1m0 1h1m0 1h2m0 1h1m0 1h1m0 1h1m0 1h2m0 1h1m0 1h1m0 1h1m0 1h1m0 1h2m0 1h1m0 1h1m0 1h1m0 1h2m0 1h1m0 1h1m0 1h1m0 1h2m0 1h1m0 1h1m0 1h1m0 1h2m0 1h1m0 1h1m0 1h1m0 1h2m0 1h1m0 1h1m0 1h1m0 1h1m0 1h2m0 1h1m0 1h1m0 1h1m0 1h2m0 1h1m0 1h1m0 1h1m0 1h2m0 1h1m0 1h1m0 1h1m0 1h2m0 1h1m0 1h1m0 1h1m0 1h1m0 1h2m0 1h1m0 1h1m0 1h1m0 1h2m0 1h1m0 1h1"/>
<path stroke="#ff0" d="M164.5 347v3m1 0v3"/>
<path stroke="#f00" d="M155 292.5h1m2 4h1m2 4h1m3 4h1m2 4h1m2 4h1m2 4h1m3 4h1m2 4h1m2 4h1m2 4h1m2 4h1m3 4h1m2 4h1m2 4h1m2 4h1m3 4h1m2 4h1m2 4h1m2 4h1m2 4h1m3 4h1m2 4h1m2 4h1m2 4h1m3 4h1m2 4h1m2 4h1m2 4h1m2 4h1m3 4h1m2 4h1m2 4h1m2 4h1m3 4h1m2 4h1m2 4h1m2 4h1"/>
<path stroke="#0ff" d="M164 347.5h1m0 1h1m0 1h1m0 1h2m0 1h1m0 1h1m0 1h1m0 1h1m0 1h2m0 1h1m0 1h1m0 1h1m0 1h1m0 1h1m0 1h2m0 1h1m0 1h1m0 1h1m0 1h1m0 1h2m0 1h1m0 1h1m0 1h1m0 1h1m0 1h1m0 1h2m0 1h1m0 1h1m0 1h1m0 1h1m0 1h2m0 1h1m0 1h1m0 1h1m0 1h1m0 1h1m0 1h2m0 1h1m0 1h1m0 1h1m0 1h1m0 1h2m0 1h1m0 1h1m0 1h1m0 1h1m0 1h1m0 1h2m0 1h1m0 1h1m0 1h1m0 1h1m0 1h1m0 1h2m0 1h1m0 1h1m0 1h1m0 1h1m0 1h2m0 1h1m0 1h1m0 1h1m0 1h1m0 1h1m0 1h2m0 1h1m0 1h1m0 1h1m0 1h1m0 1h2m0 1h1m0 1h1m0 1h1m0 1h1m0 1h1m0 1h2m0 1h1m0 1h1m0 1h1m0 1h1m0 1h2m0 1h1m0 1h1m0 1h1m0 1h1m0 1h1m0 1h2m0 1h1m0 1h1m0 1h1m0 1h1m0 1h2m0 1h1m0 1h1m0 1h1"/>
<path stroke="#0ff" d="M155 292.5h1m0 2h1m0 2h1m0 2h1m0 2h1m0 2h1m0 2h1m0 2h1m0 2h1m0 2h1m0 2h1m0 2h1m0 2h1m-1 2h1m0 2h1m0 2h1m0 2h1m0 2h1m0 2h1m0 2h1m0 2h1m0 2h1m0 2h1m0 2h1m0 2h1m0 2h1m0 2h1m0 2h1m0 2h1m0 2h1m0 2h1m0 2h1m0 2h1m0 2h1m0 2h1m0 2h1m0 2h1m-1 2h1m0 2h1m0 2h1m0 2h1m0 2h1m0 2h1m0 2h1m0 2h1m0 2h1m0 2h1m0 2h1m0 2h1m0 2h1m0 2h1m0 2h1m0 2h1m0 2h1m0 2h1m0 2h1m0 2h1m0 2h1m0 2h1m0 2h1m0 2h1m0 2h1"/>
<path stroke="#ff0" d="M216 416.5h1m3 3h1m3 2h1m3 3h1"/>
<path stroke="#ff0" d="M217 417.5h1m3 2h1m3 3h1m3 2h1"/>
<path stroke="#ff0" d="M155 292.5h1m-1 3h1m-1 3h1m-1 3h1m-1 3h1"/>
<path stroke="#0ff" d="M156 306.5h1m0 2h1m0 2h1m0 2h1m1 2h1m0 2h1m0 2h1m0 2h1m0 2h1m1 2h1m0 2h1m0 2h1m0 2h1m1 2h1m0 2h1m0 2h1m0 2h1m0 2h1m1 2h1m0 2h1m0 2h1m0 2h1m1 2h1m0 2h1m0 2h1m0 2h1m1 2h1m0 2h1m0 2h1m0 2h1m0 2h1m1 2h1m0 2h1m0 2h1m0 2h1m1 2h1m0 2h1m0 2h1m0 2h1m0 2h1m1 2h1m0 2h1m0 2h1m0 2h1m1 2h1m0 2h1m0 2h1m0 2h1m1 2h1m0 2h1m0 2h1m0 2h1m0 2h1m1 2h1m0 2h1m0 2h1m0 2h1m1 2h1m0 2h1m0 2h1"/>
<path stroke="#0ff" d="M155.5 305v1m1 0v2m1 0v2m1 0v1m1 0v2m1 0v1m1 0v2m1 0v2m1 0v1m1 0v2m1 0v1m1 0v2m1 0v2m1 0v1m1 0v2m1 0v1m1 0v2m1 0v2m1 0v1m1 0v2m1 0v1m1 0v2m1 0v2m1 0v1m1 0v2m1 0v2m1 0v1m1 0v2m1 0v1m1 0v2m1 0v2m1 0v1m1 0v2m1 0v1m1 0v2m1 0v2m1 0v1m1 0v2m1 0v1m1 0v2m1 0v2m1 0v1m1 0v2m1 0v1m1 0v2m1 0v2m1 0v1m1 0v2m1 0v1m1 0v2m1 0v2m1 0v1m1 0v2m1 0v2m1 0v1m1 0v2m1 0v1m1 0v2m1 0v2m1 0v1m1 0v2m1 0v1m1 0v2m1 0v2m1 0v1m1 0v2m1 0v1m1 0v2m1 0v2m1 0v1m1 0v2m1 0v1m1 0v2m1 0v2m1 0v1"/>
<path stroke="#0ff" d="M155 292.5h1m0 2h1m0 2h1m0 2h1m0 2h1m1 2h1m0 2h1m0 2h1m0 2h1m0 2h1m0 2h1m0 2h1m0 2h1m0 2h1m0 2h1m1 2h1m0 2h1m0 2h1m0 2h1m0 2h1m0 2h1m0 2h1m0 2h1m0 2h1m1 2h1m0 2h1m0 2h1m0 2h1m0 2h1m0 2h1m0 2h1m0 2h1m0 2h1m1 2h1m0 2h1m0 2h1m0 2h1m0 2h1m0 2h1m0 2h1m0 2h1m0 2h1m0 2h1m1 2h1m0 2h1m0 2h1m0 2h1m0 2h1m0 2h1m0 2h1m0 2h1m0 2h1m1 2h1m0 2h1m0 2h1m0 2h1m0 2h1m0 2h1m0 2h1m0 2h1m0 2h1m0 2h1m1 2h1m0 2h1m0 2h1m0 2h1m0 2h1"/>
<path stroke="#0ff" d="M155 292.5h1m0 2h1m0 2h1m0 2h1m0 2h1m1 2h1m0 2h1m0 2h1m0 2h1m0 2h1m0 2h1m0 2h1m0 2h1m1 2h1m0 2h1m0 2h1m0 2h1m0 2h1m0 2h1m0 2h1m0 2h1m1 2h1m0 2h1m0 2h1m0 2h1m0 2h1m0 2h1m0 2h1m0 2h1m1 2h1m0 2h1m0 2h1m0 2h1m0 2h1m0 2h1m0 2h1m0 2h1m0 2h1m1 2h1m0 2h1m0 2h1m0 2h1m0 2h1m0 2h1m0 2h1m0 2h1m1 2h1m0 2h1m0 2h1m0 2h1m0 2h1m0 2h1m0 2h1m0 2h1m1 2h1m0 2h1m0 2h1m0 2h1m0 2h1m0 2h1m0 2h1m0 2h1m1 2h1m0 2h1m0 2h1m0 2h1m0 2h1"/>
<path stroke="#ff0" d="M228 424.5h2"/>
<path stroke="#0ff" d="M165 250.5h1m0 3h1m0 3h1m-1 3h1m0 3h1m0 3h1m-1 3h1m0 3h1m-1 3h1m0 3h1m0 3h1m-1 3h1m0 3h1m0 3h1m-1 3h1m0 3h1m0 3h1m-1 3h1m0 3h1m-1 3h1m0 3h1m0 3h1m-1 3h1m0 3h1m0 3h1m-1 3h1m0 3h1m-1 3h1m0 3h1m0 3h1m-1 3h1m0 3h1m0 3h1m-1 3h1m0 3h1m0 3h1m-1 3h1m0 3h1m-1 3h1m0 3h1m0 3h1m-1 3h1m0 3h1m0 3h1m-1 3h1m0 3h1m-1 3h1m0 3h1m0 3h1m-1 3h1m0 3h1"/>
</g>
<g id="planets">
<path stroke="#fff" d="M268.5 134v3m1 0v6m1 0v4"/>
<text transform="translate(267.2 131) scale(0.42 1)" stroke="#000" stroke-width="0.35" fill="#ff0" font-size="24.5" letter-spacing="3.5" font-family="'Liberation Sans',sans-serif">MC</text>
<path stroke="#ff0" d="M271 152.5h1"/>
<path stroke="#fff" d="M143 326.5h4m-10 1h6m-9 1h3"/>
<text transform="translate(123.4 339) scale(0.36 1)" fill="#f00" font-size="24.5" letter-spacing="5" font-family="'Liberation Sans',sans-serif">Asc</text>
<path stroke="#f00" d="M152 325.5h1"/>
<path stroke="#7f7f7f" d="M177 184.5h1m0 1h1m0 1h1m0 1h1m0 1h2m0 1h1m0 1h1m0 1h1m0 1h1"/>
<path stroke="#007f7f" d="M160.5 182v1m1 -2v1m0 1v1m1 -12v5m0 3v1m0 3v1m1 -14v1m0 5v1m0 3v1m0 1v1m1 -14v1m0 7v5m1 -14v1m1 -2v1m1 -1v1m1 -1v1m1 -1v1m1 -1v1m1 0v1m1 0v1m0 7v5m1 -12v1m0 5v1m0 3v1m0 1v1m1 -12v5m0 3v1m0 3v1m1 -4v1m0 1v1m1 -2v1"/>
<path stroke="#007f7f" d="M190 197.5h1"/>
<path stroke="#fff" d="M154 356.5h1m-2 1h1m-2 1h1m-2 1h1m-3 1h2m-3 1h1m-2 1h1m-2 1h1m-2 1h1"/>
<path stroke="#00f" d="M128.5 361v5m1 0v2m1 0v1m0 4v1m1 -6v1m0 4v1m1 -12v3m0 4v1m0 3v1m1 -13v1m0 3v1m0 3v1m0 3v1m1 -13v1m0 3v1m0 3v9m1 -17v1m0 3v1m0 3v1m0 3v1m1 -12v3m0 4v1m0 3v1m1 -6v1m0 4v1m1 -6v1m0 4v1m1 -8v2m1 -7v5"/>
<path stroke="#00f" d="M160 354.5h1"/>
<path stroke="#fff" d="M271.5 462v3m1 -9v6m1 -9v3"/>
<path stroke="#00f" d="M262.5 470v1m1 -3v5m1 -3v1m0 2v2m1 0v1m0 4v1m1 -6v1m0 4v1m1 -11v1m0 5v1m0 3v1m1 -11v1m0 5v1m0 3v1m1 -13v17m1 -15v1m0 5v1m0 3v1m1 -11v1m0 5v1m0 3v1m1 -6v1m0 4v1m1 -6v1m0 4v1m1 -11v1m0 2v2m1 -7v5m1 -3v1"/>
<path stroke="#00f" d="M274 447.5h1"/>
<path stroke="#fff" d="M207 424.5h1m-2 1h1m-2 1h1m-2 1h1m-3 1h2m-3 1h1m-2 1h1m-2 1h1m-2 1h1"/>
<path stroke="#0f0" d="M184.5 434v1m0 9v1m1 -10v1m0 7v1m1 -8v7m1 -3v1m1 -1v1m0 6v3m1 -10v1m0 5v1m0 3v1m1 -13v9m0 3v1m1 -11v1m0 5v1m0 3v1m1 -11v1m0 6v3m1 -10v1m1 -5v7m1 -8v1m0 7v1m1 -10v1m0 9v1"/>
<path stroke="#0f0" d="M211 420.5h1"/>
<path stroke="#fff" d="M137 306.5h7m-13 1h6"/>
<path stroke="#ff0" d="M113.5 301v1m1 -1v1m1 -1v1m1 -1v1m1 -3v15m1 -13v1m0 5v1m1 -7v1m0 4v1m1 -6v1m0 3v1m1 -5v1m0 3v1m1 -1v1m1 -1v1m0 5v3m1 -8v1m0 3v1m0 3v1m1 -8v3m0 5v1"/>
<path stroke="#ff0" d="M149 305.5h1"/>
<path stroke="#fff" d="M132 290.5h6m0 1h6"/>
<path stroke="#f00" d="M114.5 293v3m1 -13v1m0 7v2m0 2v1m1 -13v1m0 5v2m0 4v1m1 -12v1m0 2v2m0 6v1m1 -11v2m0 8v1m1 -1v1m1 -1v1m1 -1v1m1 -1v1m1 -1v1m1 -13v15m1 -16v1m0 12v1m1 -15v1m0 13v1m1 -1v1m1 -1v1"/>
<path stroke="#f00" d="M149 292.5h1"/>
<path stroke="#fff" d="M222 434.5h1m-2 1h1m-3 1h2m-3 1h1m-2 1h1m-2 1h1m-3 1h2m-3 1h1m-2 1h1"/>
<path stroke="#f00" d="M209 445.5h6m-2 1h2m-3 1h1m1 0h1m-4 1h1m2 0h1m-5 1h1m3 0h1m-6 1h1m4 0h1m-14 1h5m2 0h1m-9 1h1m5 0h2m-9 1h1m7 0h1m-10 1h1m9 0h1m-11 1h1m9 0h1m-11 1h1m9 0h1m-11 1h1m9 0h1m-11 1h1m9 0h1m-10 1h1m7 0h1m-8 1h1m5 0h1m-6 1h5"/>
<path stroke="#f00" d="M225 429.5h1"/>
<path stroke="#fff" d="M142 240.5h2m0 1h3m0 1h2m0 1h3m0 1h2"/>
<path stroke="#0f0" d="M129 227.5h5m-6 1h1m5 0h1m-8 1h1m7 0h1m-9 1h1m7 0h1m-9 1h1m7 0h1m-9 1h1m7 0h1m-9 1h1m7 0h1m-8 1h1m5 0h1m-6 1h5m-3 1h1m-1 1h1m-1 1h1m-5 1h9m-5 1h1m-1 1h1m-1 1h1m-1 1h1"/>
<path stroke="#0f0" d="M159 246.5h1"/>
<path stroke="#fff" d="M180.5 417v1m1 -2v1m1 -2v1m1 -2v1m1 -3v2m1 -3v1m1 -2v1m1 -2v1m1 -2v1"/>
<path stroke="#0f0" d="M167 417.5h1m7 0h1m-8 1h1m5 0h1m-6 1h5m-6 1h1m5 0h1m-8 1h1m7 0h1m-9 1h1m7 0h1m-9 1h1m7 0h1m-9 1h1m7 0h1m-9 1h1m7 0h1m-8 1h1m5 0h1m-6 1h5m-3 1h1m-1 1h1m-1 1h1m-5 1h9m-5 1h1m-1 1h1"/>
<path stroke="#0f0" d="M193 404.5h1"/>
<path stroke="#fff" d="M223.5 435v2m1 0v3m1 0v3m1 0v4m1 0v3m1 0v2"/>
<path stroke="#00f" d="M219 454.5h5m-6 1h1m5 0h2m-9 1h1m8 0h1m-9 1h1m8 0h1m-9 1h1m8 0h1m-9 1h1m8 0h1m-9 1h1m7 0h1m-9 1h1m7 0h1m-9 1h1m7 0h1m-9 1h1m7 0h1m-9 1h1m7 0h1m-10 1h1m7 0h1m-10 1h1m8 0h1m-11 1h1m8 0h1m-11 1h1m8 0h1m-9 1h1m5 0h2m-7 1h5"/>
<path stroke="#00f" d="M226 430.5h1"/>
<path stroke="#fff" d="M139 347.5h2m0 1h3m0 1h4m0 1h3m0 1h2"/>
<path stroke="#f00" d="M125 343.5h5m-7 1h2m5 0h2m-10 1h1m9 0h1m-12 1h1m11 0h1m-14 1h1m13 0h1m-15 1h1m13 0h1m-16 1h1m15 0h1m-17 1h1m15 0h1m-17 1h1m7 0h1m7 0h1m-17 1h1m15 0h1m-17 1h1m15 0h1m-16 1h1m13 0h1m-15 1h1m13 0h1m-14 1h1m11 0h1m-12 1h1m9 0h1m-10 1h2m5 0h2m-7 1h5"/>
<path stroke="#f00" d="M158 349.5h1"/>
</g>
<g id="sideglyphs">
<path stroke="#f00" d="M747 108.5h3m-4 1h1m3 0h1m-5 1h1m3 0h1m-7 1h4m1 0h4m-9 2h9"/>
<path stroke="#ff0" d="M744.5 116v1m1 0v7m1 -8v1m1 0v7m1 -8v1m1 0v7m1 0v1m1 -1v1m1 -3v2"/>
<path stroke="#0f0" d="M750 126.5h3m-2 1h2m-3 1h1m1 0h1m-8 1h1m3 0h1m-4 1h1m1 0h1m-2 1h1m-2 1h1m1 0h1m-4 1h1m3 0h1m-6 1h1"/>
<path stroke="#00f" d="M744.5 137v1m1 -2v5m1 0v3m1 -6v3m1 -5v2m1 -1v2m1 -3v1m0 2v1m1 -4v1m0 2v2m0 3v1m1 -8v2m0 2v3"/>
<path stroke="#f00" d="M744.5 149v1m0 4v1m1 -8v2m0 3v2m1 -8v2m0 3v2m1 -5v2m0 3v2m1 -8v2m0 3v2m1 -8v2m0 3v2m1 -5v2m0 3v2m1 -8v2m0 3v2m1 -8v1m0 4v1"/>
<path stroke="#ff0" d="M744 156.5h1m7 0h1m-8 1h1m5 0h1m-6 1h1m3 0h1m-5 1h1m3 0h1m-7 1h9m-7 1h1m3 0h1m-5 1h1m3 0h1m-6 1h1m5 0h1m-8 1h1m7 0h1"/>
<path stroke="#0f0" d="M744.5 167v2m1 -3v1m0 2v1m1 -4v1m1 0v3m1 0v5m1 -8v3m1 -4v1m1 -1v1m0 2v1m1 -3v2"/>
<path stroke="#00f" d="M745 176.5h1m5 0h1m-6 1h1m3 0h1m-4 1h3m-4 1h1m3 0h1m-6 1h1m5 0h1m-7 1h1m5 0h1m-7 1h1m5 0h1m-6 1h1m3 0h1m-4 1h3"/>
<path stroke="#f00" d="M745.5 186v1m0 7v1m1 -8v1m0 5v1m1 -7v7m1 -7v1m0 5v1m1 -7v1m0 5v1m1 -7v7m1 -7v1m0 5v1m1 -8v1m0 7v1"/>
<path stroke="#ff0" d="M747 196.5h3m-5 1h2m3 0h2m-8 1h1m4 0h1m2 0h1m-8 1h2m2 0h1m2 0h1m-9 1h1m2 0h1m2 0h2m-8 1h1m2 0h1m2 0h2m-8 1h1m2 0h1m4 0h1m-8 1h2m3 0h2m-5 1h3"/>
<path stroke="#0f0" d="M744.5 212v1m1 -5v3m0 2v1m1 -7v1m0 3v2m1 -7v1m1 -1v1m1 -1v1m1 0v1m0 3v2m1 -5v3m0 2v1m1 0v1"/>
<path stroke="#00f" d="M744.5 216v1m1 0v7m1 -8v1m1 0v7m1 -8v1m1 0v6m0 1v1m1 -7v1m0 4v1m1 -7v6m0 1v1"/>
<path stroke="#f00" d="M747 236.5h3m-5 1h2m3 0h2m-7 1h1m5 0h1m-8 1h1m7 0h1m-9 1h1m3 0h1m3 0h1m-9 1h1m7 0h1m-8 1h1m5 0h1m-7 1h2m3 0h2m-5 1h3"/>
<path stroke="#00f" d="M746 246.5h3m-4 1h1m3 0h2m-5 1h1m3 0h1m-4 1h1m3 0h1m-5 1h1m3 0h1m-5 1h1m3 0h1m-6 1h1m3 0h1m-6 1h1m3 0h2m-5 1h3"/>
<path stroke="#0f0" d="M746 256.5h1m3 0h1m-4 1h3m-4 1h1m3 0h1m-5 1h1m3 0h1m-5 1h1m3 0h1m-4 1h3m-2 1h1m-3 1h5m-3 1h1"/>
<path stroke="#0f0" d="M747 266.5h3m-4 1h1m3 0h1m-5 1h1m3 0h1m-5 1h1m3 0h1m-4 1h3m-2 1h1m-3 1h5m-3 1h1m-1 1h1"/>
<path stroke="#f00" d="M750 276.5h3m-2 1h2m-3 1h1m1 0h1m-7 1h2m1 0h1m-5 1h1m2 0h1m-5 1h1m4 0h1m-6 1h1m4 0h1m-5 1h1m2 0h1m-3 1h2"/>
<path stroke="#f00" d="M745.5 287v1m0 4v2m1 -7v1m0 2v2m0 1v1m1 -6v2m0 3v1m1 -1v1m1 -1v1m1 -7v8m1 -9v1m0 6v1m1 -1v1"/>
<path stroke="#ff0" d="M745.5 297v1m1 -1v1m1 -1v7m1 -7v1m0 2v1m1 -2v1m1 -1v1m0 2v2m1 -4v2m0 2v1"/>
<path stroke="#0f0" d="M745.5 306v1m0 4v1m1 -5v4m1 -2v1m0 2v2m1 -6v5m0 1v1m1 -6v1m0 2v2m1 -7v4m1 -5v1m0 4v1"/>
<path stroke="#00f" d="M744.5 317v1m1 -2v3m1 0v1m0 2v1m1 -6v1m0 2v1m0 1v1m1 -7v9m1 -8v1m0 2v1m0 1v1m1 -4v1m0 2v1m1 -7v3m1 -2v1"/>
<path stroke="#00f" d="M745.5 326v3m1 0v1m0 2v1m1 -6v1m0 2v1m0 1v1m1 -7v1m0 1v1m0 1v5m1 -8v1m0 2v1m0 1v1m1 -4v1m0 2v1m1 -7v3"/>
<path stroke="#007f7f" d="M744.5 343v1m1 -6v3m0 1v1m0 1v1m1 -8v1m0 3v3m1 -8v1m1 -1v1m1 -1v1m1 0v1m0 3v3m1 -6v3m0 1v1m0 1v1m1 -2v1"/>
</g>
</g>
</svg>
<div id="side">
<div class="l" style="top:7px"><span style="color:#fff">Astrolog 5.40</span></div>
<div class="l" style="top:17px">"Anonymous"</div>
<div class="l" style="top:27px">Mon October 13, 1980</div>
<div class="l" style="top:37px"> 5:15am (ST +8:00 GMT)</div>
<div class="l" style="top:47px">"Taiwan"</div>
<div class="l" style="top:57px">121°24E 31°12N</div>
<div class="l" style="top:67px">Whole houses.</div>
<div class="l" style="top:77px">Tropical, Geocentric.</div>
<div class="l" style="top:87px">Julian Day = 2444525.3854</div>
<div class="l" style="top:107px"><span style="color:#f00"> 1st house: </span><span style="color:#0f0"> 0Lib00</span></div>
<div class="l" style="top:117px"><span style="color:#ff0"> 2nd house: </span><span style="color:#00f"> 0Sco00</span></div>
<div class="l" style="top:127px"><span style="color:#0f0"> 3rd house: </span><span style="color:#f00"> 0Sag00</span></div>
<div class="l" style="top:137px"><span style="color:#00f"> 4th house: </span><span style="color:#ff0"> 0Cap00</span></div>
<div class="l" style="top:147px"><span style="color:#f00"> 5th house: </span><span style="color:#0f0"> 0Aqu00</span></div>
<div class="l" style="top:157px"><span style="color:#ff0"> 6th house: </span><span style="color:#00f"> 0Pis00</span></div>
<div class="l" style="top:167px"><span style="color:#0f0"> 7th house: </span><span style="color:#f00"> 0Ari00</span></div>
<div class="l" style="top:177px"><span style="color:#00f"> 8th house: </span><span style="color:#ff0"> 0Tau00</span></div>
<div class="l" style="top:187px"><span style="color:#f00"> 9th house: </span><span style="color:#0f0"> 0Gem00</span></div>
<div class="l" style="top:197px"><span style="color:#ff0">10th house: </span><span style="color:#00f"> 0Can00</span></div>
<div class="l" style="top:207px"><span style="color:#0f0">11th house: </span><span style="color:#f00"> 0Leo00</span></div>
<div class="l" style="top:217px"><span style="color:#00f">12th house: </span><span style="color:#ff0"> 0Vir00</span></div>
<div class="l" style="top:237px"><span style="color:#f00"> Sun: </span><span style="color:#0f0">19Lib42</span><span style="color:#fff"> </span> - 0°00'</div>
<div class="l" style="top:247px"><span style="color:#00f">Moon: </span><span style="color:#f00"> 0Sag49</span><span style="color:#fff"> </span> + 4°56'</div>
<div class="l" style="top:257px"><span style="color:#0f0">Merc: </span><span style="color:#00f">14Sco39</span><span style="color:#fff"> </span> - 3°01'</div>
<div class="l" style="top:267px"><span style="color:#0f0">Venu: </span><span style="color:#ff0"> 9Vir11</span><span style="color:#fff"> </span> + 0°43'</div>
<div class="l" style="top:277px"><span style="color:#f00">Mars: </span><span style="color:#f00"> 0Sag27</span><span style="color:#fff"> </span> - 0°48'</div>
<div class="l" style="top:287px"><span style="color:#f00">Jupi: </span><span style="color:#ff0">27Vir04</span><span style="color:#fff"> </span> + 1°04'</div>
<div class="l" style="top:297px"><span style="color:#ff0">Satu: </span><span style="color:#0f0"> 2Lib38</span><span style="color:#fff"> </span> + 2°05'</div>
<div class="l" style="top:307px"><span style="color:#0f0">Uran: </span><span style="color:#00f">23Sco43</span><span style="color:#fff"> </span> + 0°14'</div>
<div class="l" style="top:317px"><span style="color:#00f">Nept: </span><span style="color:#f00">20Sag23</span><span style="color:#fff"> </span> + 1°20'</div>
<div class="l" style="top:327px"><span style="color:#00f">Plut: </span><span style="color:#0f0">21Lib37</span><span style="color:#fff"> </span> +16°35'</div>
<div class="l" style="top:337px"><span style="color:#007f7f">Node: </span><span style="color:#f00">16Leo46</span><span style="color:#fff">R</span> + 0°00'</div>
<div class="l" style="top:357px">Fire: 4, Earth: 2,</div>
<div class="l" style="top:367px">Air : 4, Water: 3</div>
<div class="l" style="top:377px">Car: 5, Fix: 3, Mut: 5</div>
<div class="l" style="top:387px">Yang: 8, Yin: 5</div>
<div class="l" style="top:397px">M: 3, N: 8, A: 11, D: 0</div>
<div class="l" style="top:407px">Ang: 3, Suc: 3, Cad: 5</div>
<div class="l" style="top:417px">Learn: 4, Share: 9</div>
</div>
</body>
</html>
